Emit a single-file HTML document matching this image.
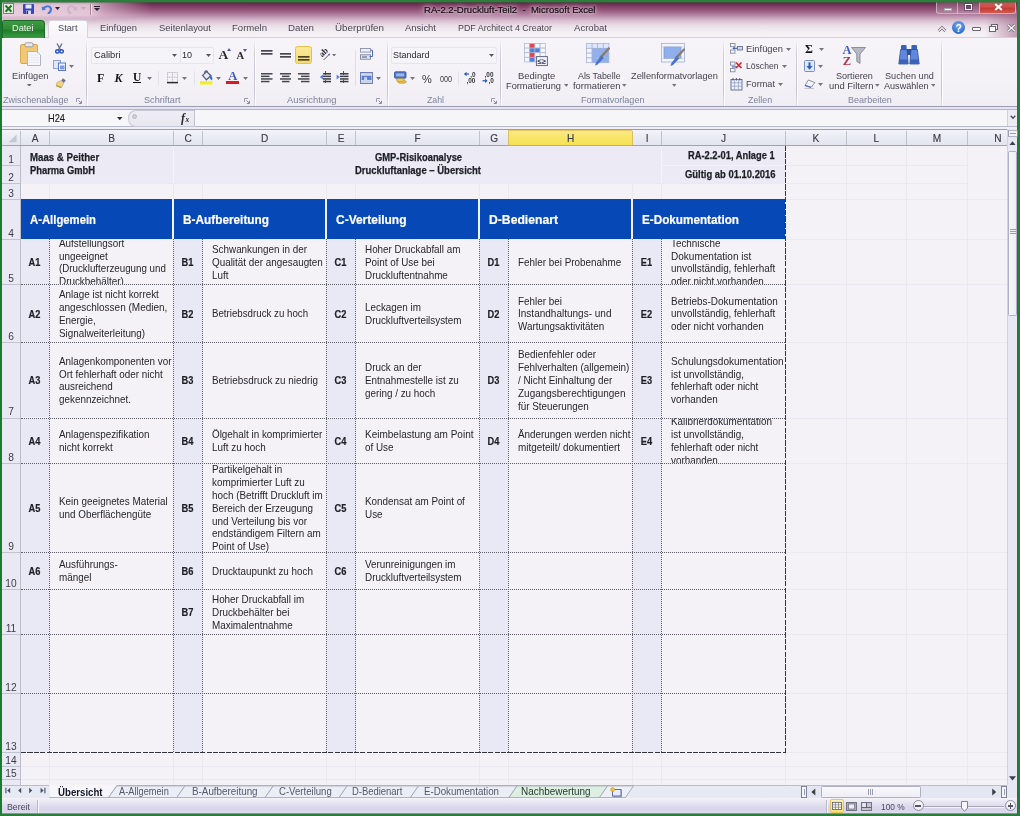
<!DOCTYPE html>
<html lang="de"><head><meta charset="utf-8"><title>RA-2.2-Druckluft-Teil2 - Microsoft Excel</title>
<style>
html,body{margin:0;padding:0}
body{width:1020px;height:816px;overflow:hidden;position:relative;background:#247a36;font-family:"Liberation Sans",sans-serif;font-size:10px;color:#3a3a44}
div,span,svg{position:absolute;box-sizing:border-box}
.t{white-space:nowrap;line-height:12px;font-size:9.6px}
.c{white-space:nowrap;line-height:12.8px;font-size:10px;color:#26262c}
.b{font-weight:bold}
.gl{color:#7886a3}
</style></head>
<body>
<div id="win" style="left:0;top:0;width:1020px;height:816px;will-change:transform">
<div style="left:2px;top:2px;width:1015px;height:811px;background:#f4f2f6"></div>
<div style="left:2px;top:2px;width:1015px;height:36px;background:linear-gradient(to bottom,#5a2342 0%,#6a2c4e 5%,#7f3d63 12%,#935478 22%,#b88aa8 38%,#d9bfd0 52%,#eadfe8 66%,#f3eef3 82%,#f5f2f6 100%)"></div>
<div style="left:2px;top:2px;width:150px;height:19px;background:linear-gradient(to right,rgba(236,212,226,.95) 0%,rgba(232,204,221,.92) 58%,rgba(228,198,216,.6) 68%,rgba(228,198,216,0) 100%);-webkit-mask-image:linear-gradient(to bottom,#000 70%,transparent);mask-image:linear-gradient(to bottom,#000 70%,transparent)"></div>
<div style="left:2px;top:2px;width:1015px;height:36px;background:linear-gradient(to bottom,rgba(255,255,255,0) 0%,rgba(255,255,255,0) 40%,rgba(246,243,247,.0) 100%)"></div>
<div style="left:2px;top:2px;width:100px;height:3px;background:linear-gradient(to bottom,rgba(150,120,140,.45),rgba(150,120,140,0))"></div>
<div style="left:985px;top:14px;width:32px;height:24px;background:linear-gradient(to right,rgba(150,90,125,0),rgba(150,90,125,.55))"></div>
<span class="t" style="left:424px;top:4.2px;font-size:9.7px;color:#140e14;-webkit-text-stroke:.2px #140e14;transform:scaleX(0.9832);transform-origin:0 50%;text-shadow:0 0 5px rgba(255,240,250,.85),0 0 3px rgba(255,240,250,.6),0 0 9px rgba(255,240,250,.7),0 0 12px rgba(255,240,250,.45)">RA-2.2-Druckluft-Teil2&nbsp; -&nbsp; Microsoft Excel</span>
<svg style="left:2.8px;top:3.2px;" width="11" height="11" viewBox="0 0 11 11"><rect x=".5" y=".5" width="10" height="10" fill="#e4f3df" stroke="#5a9a5f"/><path d="M2.5 2.5L8.5 8.7M8.5 2.5L2.5 8.7" stroke="#1f7a2e" stroke-width="2.1"/></svg>
<svg style="left:23px;top:4px;" width="11" height="10" viewBox="0 0 11 10"><rect x="0" y="0" width="11" height="10" rx="1" fill="#3c46b4"/><rect x="2.5" y="0.5" width="6" height="4" fill="#e6ecfb"/><rect x="3" y="6.5" width="5" height="3.5" fill="#d7def5"/><rect x="3.5" y="7" width="1.6" height="3" fill="#2a3190"/></svg>
<svg style="left:41px;top:4px;" width="12" height="10" viewBox="0 0 12 10"><path d="M2.2 4.6C4.5 1.6 9 1.4 9.8 4.6C10.4 7 8.6 8.6 7.6 9.4" fill="none" stroke="#4a78d6" stroke-width="2.2" stroke-linecap="round"/><path d="M0.6 2.2L1.2 6.6L5.2 5.2Z" fill="#4a78d6"/></svg>
<svg style="left:55px;top:7px" width="5" height="3" viewBox="0 0 5 3"><path d="M0 0H5L2.5 3Z" fill="#2a2230"/></svg>
<svg style="left:66px;top:4px;" width="12" height="10" viewBox="0 0 12 10"><path d="M9.8 4.6C7.5 1.6 3 1.4 2.2 4.6C1.6 7 3.4 8.6 4.4 9.4" fill="none" stroke="#cdb4c8" stroke-width="2.2" stroke-linecap="round"/><path d="M11.4 2.2L10.8 6.6L6.8 5.2Z" fill="#cdb4c8"/></svg>
<svg style="left:81px;top:7px" width="5" height="3" viewBox="0 0 5 3"><path d="M0 0H5L2.5 3Z" fill="#c3a9be"/></svg>
<div style="left:90px;top:4px;width:1px;height:11px;background:rgba(120,80,105,.55)"></div>
<div style="left:91px;top:4px;width:1px;height:11px;background:rgba(255,255,255,.5)"></div>
<div style="left:94px;top:6px;width:6px;height:1px;background:#2a2230"></div>
<svg style="left:94px;top:8px" width="6" height="3" viewBox="0 0 6 3"><path d="M0 0H6L3.0 3Z" fill="#2a2230"/></svg>
<div style="left:936px;top:2px;width:80px;height:12px;border:1px solid rgba(255,255,255,.45);border-top:0;border-radius:0 0 3px 3px;background:linear-gradient(to bottom,rgba(150,100,130,.55),rgba(190,150,175,.55))"></div>
<div style="left:957px;top:2px;width:1px;height:11px;background:rgba(255,255,255,.45)"></div>
<div style="left:979px;top:2px;width:1px;height:11px;background:rgba(255,255,255,.45)"></div>
<div style="left:980px;top:2px;width:35px;height:11px;border-radius:0 0 3px 0;background:linear-gradient(to bottom,#c4565a 0%,#d2504c 45%,#c23a32 55%,#d25a4e 100%)"></div>
<div style="left:943.5px;top:8.4px;width:8px;height:2.6px;background:#fff;border:.6px solid rgba(80,50,70,.45)"></div>
<div style="left:964.5px;top:4px;width:7px;height:6.4px;border:1.7px solid #fff;outline:.7px solid rgba(60,40,60,.4);background:rgba(70,50,80,.55)"></div>
<svg style="left:993.5px;top:3.4px;" width="9" height="8" viewBox="0 0 9 8"><path d="M1.2 1L7.8 7M7.8 1L1.2 7" stroke="#fff" stroke-width="2.1"/></svg>
<div style="left:2px;top:37px;width:1015px;height:1px;background:#d3d0dc"></div>
<div style="left:2px;top:20px;width:43px;height:18px;border-radius:2px 4px 0 0;border:1px solid #1c6a28;border-bottom:0;background:linear-gradient(to bottom,#3f9a45 0%,#2f8c36 45%,#1f7f2b 55%,#3c9a42 100%)"></div>
<span class="t" style="left:12px;top:22.4px;font-size:9.9px;color:#f2fbee;transform:scaleX(0.9322);transform-origin:0 50%">Datei</span>
<div style="left:48px;top:20px;width:40px;height:19px;border-radius:3px 3px 0 0;border:1px solid #d6d2de;border-bottom:0;background:linear-gradient(to bottom,#fbfafc,#f5f3f7)"></div>
<span class="t" style="left:58px;top:22.4px;font-size:9.9px;color:#4a4a55;transform:scaleX(0.9348);transform-origin:0 50%">Start</span>
<span class="t" style="left:100px;top:22.4px;font-size:9.9px;color:#4a4652;transform:scaleX(0.9491);transform-origin:0 50%">Einfügen</span>
<span class="t" style="left:159px;top:22.4px;font-size:9.9px;color:#4a4652;transform:scaleX(0.9566);transform-origin:0 50%">Seitenlayout</span>
<span class="t" style="left:232px;top:22.4px;font-size:9.9px;color:#4a4652;transform:scaleX(0.9664);transform-origin:0 50%">Formeln</span>
<span class="t" style="left:288px;top:22.4px;font-size:9.9px;color:#4a4652;transform:scaleX(0.9864);transform-origin:0 50%">Daten</span>
<span class="t" style="left:335px;top:22.4px;font-size:9.9px;color:#4a4652;transform:scaleX(0.9918);transform-origin:0 50%">Überprüfen</span>
<span class="t" style="left:405px;top:22.4px;font-size:9.9px;color:#4a4652;transform:scaleX(0.9571);transform-origin:0 50%">Ansicht</span>
<span class="t" style="left:458px;top:22.4px;font-size:9.9px;color:#4a4652;transform:scaleX(0.9014);transform-origin:0 50%">PDF Architect 4 Creator</span>
<span class="t" style="left:574px;top:22.4px;font-size:9.9px;color:#4a4652;transform:scaleX(0.9693);transform-origin:0 50%">Acrobat</span>
<svg style="left:936.5px;top:24.5px;" width="10" height="8" viewBox="0 0 10 8"><path d="M1.6 6L5 2.6L8.4 6" fill="none" stroke="#6a6470" stroke-width="2.6" stroke-linejoin="miter"/><path d="M1.6 6L5 2.6L8.4 6" fill="none" stroke="#fbfafc" stroke-width="1.1"/></svg>
<div style="left:952px;top:21px;width:13px;height:13px;border-radius:50%;background:radial-gradient(circle at 50% 35%,#7fb0f0,#2f6fd0 70%,#2a5fc0)"></div>
<span class="t" style="left:955.6px;top:21.5px;font-size:10.5px;font-weight:bold;color:#fff">?</span>
<div style="left:972px;top:27px;width:9px;height:4px;background:#fff;border:1px solid #68626e;border-radius:1px"></div>
<div style="left:991px;top:24px;width:7px;height:6px;background:#f3f0f5;border:1px solid #68626e"></div>
<div style="left:989px;top:26px;width:7px;height:6px;background:#fff;border:1px solid #68626e"></div>
<svg style="left:1007px;top:24px;" width="9" height="8" viewBox="0 0 9 8"><path d="M1.2 1L7.8 7M7.8 1L1.2 7" stroke="#6a6470" stroke-width="2.8"/><path d="M1.2 1L7.8 7M7.8 1L1.2 7" stroke="#fff" stroke-width="1.2"/></svg>
<div style="left:2px;top:38px;width:1015px;height:68px;background:linear-gradient(to bottom,#f6f4f8 0%,#f4f2f6 60%,#f0eef4 100%)"></div>
<div style="left:2px;top:106px;width:1015px;height:1px;background:#9c9db2"></div>
<div style="left:2px;top:107px;width:1015px;height:2px;background:#e6e3f0"></div>
<div style="left:2px;top:109px;width:1015px;height:1px;background:#b4b5c6"></div>
<svg style="left:20px;top:42px;" width="21" height="24" viewBox="0 0 21 24"><rect x="0.5" y="2.5" width="17" height="19" rx="1.5" fill="#f1c778" stroke="#d8a750"/><rect x="5" y="0.8" width="8" height="4" rx="1.2" fill="#e9e9ee" stroke="#8d8d98" stroke-width=".8"/><path d="M7.5 9.5H16.5L20.5 13V23.5H7.5Z" fill="#f7f7fb" stroke="#a9adc0" stroke-width=".9"/><path d="M9 13H18M9 15.5H19M9 18H19M9 20.5H19" stroke="#dfe3f0" stroke-width=".8"/></svg>
<span class="t" style="left:11.5px;top:70px;font-size:9.8px;color:#46424e;transform:scaleX(0.9435);transform-origin:0 50%;">Einfügen</span>
<svg style="left:27.3px;top:83.6px" width="4.6" height="2.8" viewBox="0 0 4.6 2.8"><path d="M0 0H4.6L2.3 2.8Z" fill="#6a6670"/></svg>
<svg style="left:55px;top:43px;" width="9" height="11" viewBox="0 0 9 11"><path d="M2 0.5L5.6 7M7 0.5L3.4 7" stroke="#5d6c8c" stroke-width="1.3" fill="none"/><circle cx="2.4" cy="8.4" r="1.7" fill="none" stroke="#2b55c4" stroke-width="1.5"/><circle cx="6.6" cy="8.4" r="1.7" fill="none" stroke="#2b55c4" stroke-width="1.5"/></svg>
<svg style="left:53px;top:60px;" width="13" height="11" viewBox="0 0 13 11"><rect x="0.5" y="0.5" width="7" height="8" fill="#dfe7f8" stroke="#8ea3d0"/><rect x="5.5" y="3" width="7" height="7.5" fill="#eef2fc" stroke="#5878c0"/><rect x="7" y="5.5" width="4.5" height="3.8" fill="#7d9de0"/></svg>
<svg style="left:69px;top:64.5px" width="5" height="3" viewBox="0 0 5 3"><path d="M0 0H5L2.5 3Z" fill="#77737d"/></svg>
<svg style="left:55px;top:77px;" width="12" height="12" viewBox="0 0 12 12"><path d="M8 1.2L10.8 3.6L8.6 6L6 3.8Z" fill="#6a6f9a"/><path d="M2.2 5.2L6.4 3.6L8.8 6.2L6.4 10.6L1.2 8.6Z" fill="#ecd58a" stroke="#c9ab55" stroke-width=".7"/><path d="M1.2 8.6L6.4 10.6" stroke="#b99a45" stroke-width="1.2"/></svg>
<span class="t" style="left:2.5px;top:94px;font-size:9.8px;color:#7d829c;transform:scaleX(0.925);transform-origin:0 50%;">Zwischenablage</span>
<svg style="left:76px;top:97.5px;" width="6" height="6" viewBox="0 0 6 6"><path d="M0.5 4V0.5H4" fill="none" stroke="#9a9aae" stroke-width="1"/><path d="M2.5 2.5L5 5M5.5 2.8V5.5H2.8" fill="none" stroke="#8a8a9e" stroke-width="1"/></svg>
<div style="left:86px;top:40px;width:1px;height:66px;background:linear-gradient(to bottom,rgba(200,198,212,0),#cfcdda 20%,#c6c5d4 80%,rgba(200,198,212,.4))"></div>
<div style="left:87px;top:40px;width:1px;height:66px;background:linear-gradient(to bottom,rgba(255,255,255,0),rgba(255,255,255,.9) 20%,rgba(255,255,255,.9))"></div>
<div style="left:91px;top:46.5px;width:88.5px;height:17px;background:#f5f4f8;border:1px solid #e6e4ec;border-right:0;border-radius:2px 0 0 2px"></div>
<span class="t" style="left:93.5px;top:49px;font-size:9.7px;color:#2c2a32;transform:scaleX(0.9647);transform-origin:0 50%;">Calibri</span>
<svg style="left:171.5px;top:54px" width="5" height="3" viewBox="0 0 5 3"><path d="M0 0H5L2.5 3Z" fill="#5a5660"/></svg>
<div style="left:179.5px;top:46.5px;width:34px;height:17px;background:#f5f4f8;border:1px solid #e6e4ec;border-radius:0 2px 2px 0"></div>
<span class="t" style="left:182.3px;top:49px;font-size:9.7px;color:#2c2a32;transform:scaleX(0.9275);transform-origin:0 50%;">10</span>
<svg style="left:205.5px;top:54px" width="5" height="3" viewBox="0 0 5 3"><path d="M0 0H5L2.5 3Z" fill="#5a5660"/></svg>
<span class="t" style="left:218.5px;top:47.5px;font-family:'Liberation Serif',serif;font-weight:bold;font-size:13.5px;line-height:14px;color:#2a2a30">A</span>
<svg style="left:226.5px;top:48px;" width="4" height="3" viewBox="0 0 4 3"><path d="M0 3L2 0L4 3Z" fill="#4a5cb0"/></svg>
<span class="t" style="left:236.5px;top:49.5px;font-family:'Liberation Serif',serif;font-weight:bold;font-size:10.6px;line-height:12px;color:#2a2a30">A</span>
<svg style="left:243px;top:48.5px;" width="4" height="3" viewBox="0 0 4 3"><path d="M0 0L2 3L4 0Z" fill="#4a5cb0"/></svg>
<span class="t" style="left:97px;top:70.5px;font-family:'Liberation Serif',serif;font-weight:bold;font-size:12px;line-height:14px;color:#141418">F</span>
<span class="t" style="left:114.5px;top:70.5px;font-family:'Liberation Serif',serif;font-weight:bold;font-style:italic;font-size:12px;line-height:14px;color:#141418">K</span>
<span class="t" style="left:133px;top:70px;font-family:'Liberation Serif',serif;font-weight:bold;font-size:11.5px;line-height:14px;color:#141418">U</span>
<div style="left:133px;top:82.3px;width:8px;height:1.2px;background:#141418"></div>
<svg style="left:147px;top:76.5px" width="5" height="3" viewBox="0 0 5 3"><path d="M0 0H5L2.5 3Z" fill="#77737d"/></svg>
<div style="left:158px;top:71px;width:1px;height:14px;background:#e2e0e9"></div>
<svg style="left:166.5px;top:72px;" width="11" height="12" viewBox="0 0 11 12"><path d="M0.5 0.5H10.5V10M0.5 0.5V10M5.5 0.5V10M0.5 5.2H10.5" fill="none" stroke="#b9b7c4" stroke-width="1" stroke-dasharray="1 .6"/><path d="M0 10.6H11" stroke="#2a2a30" stroke-width="1.5"/></svg>
<svg style="left:182px;top:76.5px" width="5" height="3" viewBox="0 0 5 3"><path d="M0 0H5L2.5 3Z" fill="#77737d"/></svg>
<div style="left:194px;top:71px;width:1px;height:14px;background:#e2e0e9"></div>
<svg style="left:200px;top:70px;" width="13" height="15" viewBox="0 0 13 15"><path d="M2.6 5.4L6.6 1.6L11 5.8L6.4 9.8Z" fill="#e6e9f2" stroke="#59607c" stroke-width="1.3"/><path d="M4.8 3.6C4.2 0.4 7.6 -0.2 7.6 2.8" fill="none" stroke="#59607c" stroke-width="1.1"/><path d="M9.6 5.2C12.4 6 13 8.6 11.8 10.2C10.2 9.6 9.4 7.6 9.6 5.2Z" fill="#2f6fd8"/><rect x="0" y="11.2" width="12.5" height="3.3" fill="#f2ee28"/></svg>
<svg style="left:216px;top:76.5px" width="5" height="3" viewBox="0 0 5 3"><path d="M0 0H5L2.5 3Z" fill="#77737d"/></svg>
<span class="t" style="left:228.2px;top:68.6px;font-family:'Liberation Serif',serif;font-weight:bold;font-size:12.5px;line-height:14px;color:#3b5cc0">A</span>
<div style="left:226px;top:81.2px;width:13px;height:3.2px;background:#e01822"></div>
<svg style="left:242.5px;top:76.5px" width="5" height="3" viewBox="0 0 5 3"><path d="M0 0H5L2.5 3Z" fill="#77737d"/></svg>
<span class="t" style="left:144px;top:94px;font-size:9.8px;color:#7d829c;transform:scaleX(0.931);transform-origin:0 50%;">Schriftart</span>
<svg style="left:243.5px;top:97.5px;" width="6" height="6" viewBox="0 0 6 6"><path d="M0.5 4V0.5H4" fill="none" stroke="#9a9aae" stroke-width="1"/><path d="M2.5 2.5L5 5M5.5 2.8V5.5H2.8" fill="none" stroke="#8a8a9e" stroke-width="1"/></svg>
<div style="left:254px;top:40px;width:1px;height:66px;background:linear-gradient(to bottom,rgba(200,198,212,0),#cfcdda 20%,#c6c5d4 80%,rgba(200,198,212,.4))"></div>
<div style="left:255px;top:40px;width:1px;height:66px;background:linear-gradient(to bottom,rgba(255,255,255,0),rgba(255,255,255,.9) 20%,rgba(255,255,255,.9))"></div>
<svg style="left:261px;top:49.6px" width="11.5" height="5.2" viewBox="0 0 11.5 5.2"><rect x="0" y="0" width="11.5" height="1.7" fill="#46464e"/><rect x="0" y="3" width="11.5" height="1.7" fill="#46464e"/></svg>
<svg style="left:279.7px;top:52.8px" width="11.5" height="5.2" viewBox="0 0 11.5 5.2"><rect x="0" y="0" width="11.5" height="1.7" fill="#46464e"/><rect x="0" y="3" width="11.5" height="1.7" fill="#46464e"/></svg>
<div style="left:295px;top:46.3px;width:17.3px;height:17.4px;background:linear-gradient(to bottom,#fbe99a,#f7dc6a);border:1px solid #e3c14e;border-radius:2.5px"></div>
<svg style="left:298px;top:55.6px" width="11.5" height="5.2" viewBox="0 0 11.5 5.2"><rect x="0" y="0" width="11.5" height="1.7" fill="#46422e"/><rect x="0" y="3" width="11.5" height="1.7" fill="#46422e"/></svg>
<svg style="left:317.5px;top:46px;" width="14" height="14" viewBox="0 0 14 14"><text x="0" y="0" font-family="Liberation Serif" font-size="8.6" font-weight="bold" fill="#26262c" transform="translate(4.2,11.6) rotate(-45)">ab</text><path d="M5.6 14L11 8.6" stroke="#4a4a56" stroke-width=".9"/><path d="M9.8 8.2L12.2 7.4L11.4 9.8Z" fill="#4a5cb0"/></svg>
<svg style="left:332.4px;top:53.6px" width="4.2" height="2.6" viewBox="0 0 4.2 2.6"><path d="M0 0H4.2L2.1 2.6Z" fill="#77737d"/></svg>
<div style="left:354.5px;top:50px;width:1px;height:36px;background:#e0dee8"></div>
<svg style="left:360px;top:48px;" width="13" height="12" viewBox="0 0 13 12"><rect x="0.5" y="0.5" width="10" height="3.6" fill="#eef0f8" stroke="#8a90a8" stroke-width=".9"/><rect x="0.5" y="6.8" width="10" height="4.4" fill="#dfe5f4" stroke="#7a84a4" stroke-width=".9"/><path d="M11 2.2H12.5V8.5H9.5" fill="none" stroke="#4a68b8" stroke-width="1"/><path d="M2 9H7" stroke="#55586a" stroke-width="1"/></svg>
<svg style="left:261px;top:72.8px" width="11.5" height="9.8" viewBox="0 0 11.5 9.8"><rect x="0" y="0.0" width="11.5" height="1.5" fill="#46464e"/><rect x="0" y="2.6" width="8.5" height="1.5" fill="#46464e"/><rect x="0" y="5.2" width="11.5" height="1.5" fill="#46464e"/><rect x="0" y="7.8" width="8.5" height="1.5" fill="#46464e"/></svg>
<svg style="left:279.7px;top:72.8px" width="11.5" height="9.8" viewBox="0 0 11.5 9.8"><rect x="0.0" y="0.0" width="11.5" height="1.5" fill="#46464e"/><rect x="2.0" y="2.6" width="7.5" height="1.5" fill="#46464e"/><rect x="0.0" y="5.2" width="11.5" height="1.5" fill="#46464e"/><rect x="2.0" y="7.8" width="7.5" height="1.5" fill="#46464e"/></svg>
<svg style="left:298px;top:72.8px" width="11.5" height="9.8" viewBox="0 0 11.5 9.8"><rect x="0.0" y="0.0" width="11.5" height="1.5" fill="#46464e"/><rect x="3.0" y="2.6" width="8.5" height="1.5" fill="#46464e"/><rect x="0.0" y="5.2" width="11.5" height="1.5" fill="#46464e"/><rect x="3.0" y="7.8" width="8.5" height="1.5" fill="#46464e"/></svg>
<svg style="left:322.5px;top:72.8px" width="8.5" height="9.8" viewBox="0 0 8.5 9.8"><rect x="0" y="0.0" width="8.5" height="1.5" fill="#3c3c46"/><rect x="0" y="2.6" width="8.5" height="1.5" fill="#3c3c46"/><rect x="0" y="5.2" width="8.5" height="1.5" fill="#3c3c46"/><rect x="0" y="7.8" width="8.5" height="1.5" fill="#3c3c46"/></svg>
<svg style="left:318.6px;top:74.2px;" width="4.5" height="6" viewBox="0 0 4.5 6"><path d="M4 0.6L0.8 3L4 5.4Z" fill="#5a7fd6"/></svg>
<div style="left:325px;top:70.5px;width:1px;height:12.5px;border-left:1px dotted #555"></div>
<svg style="left:340px;top:72.8px" width="8.5" height="9.8" viewBox="0 0 8.5 9.8"><rect x="0" y="0.0" width="8.5" height="1.5" fill="#3c3c46"/><rect x="0" y="2.6" width="8.5" height="1.5" fill="#3c3c46"/><rect x="0" y="5.2" width="8.5" height="1.5" fill="#3c3c46"/><rect x="0" y="7.8" width="8.5" height="1.5" fill="#3c3c46"/></svg>
<svg style="left:336.4px;top:74.2px;" width="4.5" height="6" viewBox="0 0 4.5 6"><path d="M0.6 0.6L3.8 3L0.6 5.4Z" fill="#5a7fd6"/></svg>
<div style="left:342.5px;top:70.5px;width:1px;height:12.5px;border-left:1px dotted #555"></div>
<svg style="left:360px;top:72px;" width="13" height="12" viewBox="0 0 13 12"><rect x="0.5" y="0.5" width="12" height="11" fill="#e6ecfa" stroke="#6f7fae" stroke-width="1"/><rect x="1.5" y="3.6" width="10" height="4.6" fill="#5c7fd0"/><text x="4" y="8" font-family="Liberation Sans" font-size="5.5" font-weight="bold" fill="#fff">a</text><path d="M0.5 1.8H12.5M0.5 10H12.5" stroke="#9aa6c8" stroke-width=".7"/></svg>
<svg style="left:376px;top:76.5px" width="5" height="3" viewBox="0 0 5 3"><path d="M0 0H5L2.5 3Z" fill="#77737d"/></svg>
<span class="t" style="left:287.4px;top:94px;font-size:9.8px;color:#7d829c;transform:scaleX(0.9546);transform-origin:0 50%;">Ausrichtung</span>
<svg style="left:376px;top:97.5px;" width="6" height="6" viewBox="0 0 6 6"><path d="M0.5 4V0.5H4" fill="none" stroke="#9a9aae" stroke-width="1"/><path d="M2.5 2.5L5 5M5.5 2.8V5.5H2.8" fill="none" stroke="#8a8a9e" stroke-width="1"/></svg>
<div style="left:386.5px;top:40px;width:1px;height:66px;background:linear-gradient(to bottom,rgba(200,198,212,0),#cfcdda 20%,#c6c5d4 80%,rgba(200,198,212,.4))"></div>
<div style="left:387.5px;top:40px;width:1px;height:66px;background:linear-gradient(to bottom,rgba(255,255,255,0),rgba(255,255,255,.9) 20%,rgba(255,255,255,.9))"></div>
<div style="left:391px;top:46.5px;width:105.5px;height:17px;background:#f5f4f8;border:1px solid #e6e4ec;border-radius:2px"></div>
<span class="t" style="left:393.4px;top:49px;font-size:9.7px;color:#2c2a32;transform:scaleX(0.9306);transform-origin:0 50%;">Standard</span>
<svg style="left:488.8px;top:54px" width="5" height="3" viewBox="0 0 5 3"><path d="M0 0H5L2.5 3Z" fill="#5a5660"/></svg>
<svg style="left:393.5px;top:71px;" width="14" height="14" viewBox="0 0 14 14"><rect x="0.5" y="0.8" width="11.5" height="6.4" rx="1" fill="#4f74c8" stroke="#34509a" stroke-width=".8"/><rect x="2.2" y="2.4" width="8" height="3" fill="#9db6ec"/><ellipse cx="8" cy="10.8" rx="4.4" ry="1.5" fill="#e9c04a" stroke="#b58a25" stroke-width=".6"/><ellipse cx="6.4" cy="9" rx="4.2" ry="1.4" fill="#f0cf6a" stroke="#b58a25" stroke-width=".6"/></svg>
<svg style="left:410px;top:76.5px" width="5" height="3" viewBox="0 0 5 3"><path d="M0 0H5L2.5 3Z" fill="#77737d"/></svg>
<span class="t" style="left:422px;top:71.5px;font-size:11px;line-height:14px;color:#3a3a42">%</span>
<span class="t" style="left:439.6px;top:72.5px;font-size:9.7px;color:#3a3a42;transform:scaleX(0.742);transform-origin:0 50%;">000</span>
<div style="left:457.5px;top:71px;width:1px;height:14px;background:#e2e0e9"></div>
<svg style="left:464px;top:71px;" width="14" height="14" viewBox="0 0 14 14"><path d="M0.5 3H5" stroke="#2e5fc4" stroke-width="1.3"/><path d="M0 3L2.6 0.8V5.2Z" fill="#2e5fc4"/><text x="6.2" y="5.6" font-family="Liberation Sans" font-size="6.4" font-weight="bold" fill="#33333a">,0</text><text x="2.4" y="12.4" font-family="Liberation Sans" font-size="6.4" font-weight="bold" fill="#33333a">,00</text></svg>
<svg style="left:481.5px;top:71px;" width="14" height="14" viewBox="0 0 14 14"><text x="2.6" y="5.6" font-family="Liberation Sans" font-size="6.4" font-weight="bold" fill="#33333a">,00</text><path d="M0.5 9.8H5" stroke="#2e5fc4" stroke-width="1.3"/><path d="M5.6 9.8L3 7.6V12Z" fill="#2e5fc4"/><text x="6.6" y="12.4" font-family="Liberation Sans" font-size="6.4" font-weight="bold" fill="#33333a">,0</text></svg>
<span class="t" style="left:427.4px;top:94px;font-size:9.8px;color:#7d829c;transform:scaleX(0.8918);transform-origin:0 50%;">Zahl</span>
<svg style="left:490.5px;top:97.5px;" width="6" height="6" viewBox="0 0 6 6"><path d="M0.5 4V0.5H4" fill="none" stroke="#9a9aae" stroke-width="1"/><path d="M2.5 2.5L5 5M5.5 2.8V5.5H2.8" fill="none" stroke="#8a8a9e" stroke-width="1"/></svg>
<div style="left:500px;top:40px;width:1px;height:66px;background:linear-gradient(to bottom,rgba(200,198,212,0),#cfcdda 20%,#c6c5d4 80%,rgba(200,198,212,.4))"></div>
<div style="left:501px;top:40px;width:1px;height:66px;background:linear-gradient(to bottom,rgba(255,255,255,0),rgba(255,255,255,.9) 20%,rgba(255,255,255,.9))"></div>
<svg style="left:524px;top:42.5px;" width="24" height="24" viewBox="0 0 24 24"><rect x="0.5" y="0.5" width="5.2" height="4.6" fill="#f5f6fb" stroke="#a9b4d4" stroke-width=".7"/><rect x="5.7" y="0.5" width="5.2" height="4.6" fill="#e84448" stroke="#a9b4d4" stroke-width=".7"/><rect x="10.9" y="0.5" width="5.2" height="4.6" fill="#f5f6fb" stroke="#a9b4d4" stroke-width=".7"/><rect x="16.1" y="0.5" width="5.2" height="4.6" fill="#f5f6fb" stroke="#a9b4d4" stroke-width=".7"/><rect x="0.5" y="5.1" width="5.2" height="4.6" fill="#f5f6fb" stroke="#a9b4d4" stroke-width=".7"/><rect x="5.7" y="5.1" width="5.2" height="4.6" fill="#4f7fe0" stroke="#a9b4d4" stroke-width=".7"/><rect x="10.9" y="5.1" width="5.2" height="4.6" fill="#4f7fe0" stroke="#a9b4d4" stroke-width=".7"/><rect x="16.1" y="5.1" width="5.2" height="4.6" fill="#f5f6fb" stroke="#a9b4d4" stroke-width=".7"/><rect x="0.5" y="9.7" width="5.2" height="4.6" fill="#f5f6fb" stroke="#a9b4d4" stroke-width=".7"/><rect x="5.7" y="9.7" width="5.2" height="4.6" fill="#e84448" stroke="#a9b4d4" stroke-width=".7"/><rect x="10.9" y="9.7" width="5.2" height="4.6" fill="#f5f6fb" stroke="#a9b4d4" stroke-width=".7"/><rect x="16.1" y="9.7" width="5.2" height="4.6" fill="#f5f6fb" stroke="#a9b4d4" stroke-width=".7"/><rect x="0.5" y="14.299999999999999" width="5.2" height="4.6" fill="#f5f6fb" stroke="#a9b4d4" stroke-width=".7"/><rect x="5.7" y="14.299999999999999" width="5.2" height="4.6" fill="#4f7fe0" stroke="#a9b4d4" stroke-width=".7"/><rect x="10.9" y="14.299999999999999" width="5.2" height="4.6" fill="#f5f6fb" stroke="#a9b4d4" stroke-width=".7"/><rect x="16.1" y="14.299999999999999" width="5.2" height="4.6" fill="#f5f6fb" stroke="#a9b4d4" stroke-width=".7"/><rect x="12.4" y="13.6" width="11" height="9" fill="#eef1f8" stroke="#5a6078" stroke-width=".9"/><text x="13.6" y="21" font-family="Liberation Sans" font-size="7.5" font-weight="bold" fill="#33384a">≤≥</text></svg>
<span class="t" style="left:518.3px;top:70px;font-size:9.8px;color:#46424e;transform:scaleX(0.9641);transform-origin:0 50%;">Bedingte</span>
<span class="t" style="left:506px;top:80.3px;font-size:9.8px;color:#46424e;transform:scaleX(0.944);transform-origin:0 50%;">Formatierung</span>
<svg style="left:563.5px;top:84.2px" width="4.6" height="2.8" viewBox="0 0 4.6 2.8"><path d="M0 0H4.6L2.3 2.8Z" fill="#77737d"/></svg>
<svg style="left:586px;top:43px;" width="24" height="24" viewBox="0 0 24 24"><rect x="0.5" y="0.5" width="5.6" height="4.8" fill="#dfe8fb" stroke="#9fb0d8" stroke-width=".7"/><rect x="6.1" y="0.5" width="5.6" height="4.8" fill="#dfe8fb" stroke="#9fb0d8" stroke-width=".7"/><rect x="11.7" y="0.5" width="5.6" height="4.8" fill="#dfe8fb" stroke="#9fb0d8" stroke-width=".7"/><rect x="17.299999999999997" y="0.5" width="5.6" height="4.8" fill="#dfe8fb" stroke="#9fb0d8" stroke-width=".7"/><rect x="0.5" y="5.3" width="5.6" height="4.8" fill="#f5f6fb" stroke="#9fb0d8" stroke-width=".7"/><rect x="6.1" y="5.3" width="5.6" height="4.8" fill="#8fb0ec" stroke="#9fb0d8" stroke-width=".7"/><rect x="11.7" y="5.3" width="5.6" height="4.8" fill="#8fb0ec" stroke="#9fb0d8" stroke-width=".7"/><rect x="17.299999999999997" y="5.3" width="5.6" height="4.8" fill="#8fb0ec" stroke="#9fb0d8" stroke-width=".7"/><rect x="0.5" y="10.1" width="5.6" height="4.8" fill="#f5f6fb" stroke="#9fb0d8" stroke-width=".7"/><rect x="6.1" y="10.1" width="5.6" height="4.8" fill="#8fb0ec" stroke="#9fb0d8" stroke-width=".7"/><rect x="11.7" y="10.1" width="5.6" height="4.8" fill="#8fb0ec" stroke="#9fb0d8" stroke-width=".7"/><rect x="17.299999999999997" y="10.1" width="5.6" height="4.8" fill="#8fb0ec" stroke="#9fb0d8" stroke-width=".7"/><rect x="0.5" y="14.899999999999999" width="5.6" height="4.8" fill="#f5f6fb" stroke="#9fb0d8" stroke-width=".7"/><rect x="6.1" y="14.899999999999999" width="5.6" height="4.8" fill="#8fb0ec" stroke="#9fb0d8" stroke-width=".7"/><rect x="11.7" y="14.899999999999999" width="5.6" height="4.8" fill="#8fb0ec" stroke="#9fb0d8" stroke-width=".7"/><rect x="17.299999999999997" y="14.899999999999999" width="5.6" height="4.8" fill="#8fb0ec" stroke="#9fb0d8" stroke-width=".7"/><path d="M22.8 5.5L14.5 14.5" stroke="#8c7a70" stroke-width="2.4" stroke-linecap="round"/><path d="M15.6 12.6L17.8 15L11.6 21.6L9 22.6L10 19.6Z" fill="#4a72cc"/></svg>
<span class="t" style="left:578px;top:70px;font-size:9.8px;color:#46424e;transform:scaleX(0.9025);transform-origin:0 50%;">Als Tabelle</span>
<span class="t" style="left:572.6px;top:80.3px;font-size:9.8px;color:#46424e;transform:scaleX(0.9564);transform-origin:0 50%;">formatieren</span>
<svg style="left:622px;top:84.2px" width="4.6" height="2.8" viewBox="0 0 4.6 2.8"><path d="M0 0H4.6L2.3 2.8Z" fill="#77737d"/></svg>
<svg style="left:661px;top:43px;" width="24" height="24" viewBox="0 0 24 24"><rect x="0.5" y="0.5" width="23" height="18.5" fill="#f3f5fb" stroke="#9fb0d8" stroke-width=".8"/><rect x="3" y="4" width="17" height="11.5" fill="#8fb0ec" stroke="#6f8fd0" stroke-width=".7"/><path d="M0.5 4H23.5M0.5 15.5H23.5" stroke="#b5c2e0" stroke-width=".6"/><path d="M23 6.5L15 15" stroke="#8c7a70" stroke-width="2.4" stroke-linecap="round"/><path d="M16 13L18.2 15.4L12 22L9.4 23L10.4 20Z" fill="#4a72cc"/></svg>
<span class="t" style="left:630.8px;top:70px;font-size:9.8px;color:#46424e;transform:scaleX(0.9432);transform-origin:0 50%;">Zellenformatvorlagen</span>
<svg style="left:671.5px;top:84.2px" width="4.6" height="2.8" viewBox="0 0 4.6 2.8"><path d="M0 0H4.6L2.3 2.8Z" fill="#77737d"/></svg>
<span class="t" style="left:580.8px;top:94px;font-size:9.8px;color:#7d829c;transform:scaleX(0.9255);transform-origin:0 50%;">Formatvorlagen</span>
<div style="left:723px;top:40px;width:1px;height:66px;background:linear-gradient(to bottom,rgba(200,198,212,0),#cfcdda 20%,#c6c5d4 80%,rgba(200,198,212,.4))"></div>
<div style="left:724px;top:40px;width:1px;height:66px;background:linear-gradient(to bottom,rgba(255,255,255,0),rgba(255,255,255,.9) 20%,rgba(255,255,255,.9))"></div>
<svg style="left:730px;top:43px;" width="13" height="11" viewBox="0 0 13 11"><rect x="0.5" y="0.5" width="4.5" height="3.2" fill="#f4f5fa" stroke="#7a8098" stroke-width=".8"/><rect x="0.5" y="7" width="4.5" height="3.2" fill="#f4f5fa" stroke="#7a8098" stroke-width=".8"/><rect x="7.4" y="3.4" width="5" height="3.6" fill="#cfd8ee" stroke="#5a6484" stroke-width=".8"/><path d="M3 5.3H7" stroke="#3c5cb8" stroke-width="1.2"/><path d="M2.4 5.3L4.6 3.8V6.8Z" fill="#3c5cb8"/></svg>
<span class="t" style="left:745.5px;top:42.5px;font-size:9.8px;color:#46424e;transform:scaleX(0.9564);transform-origin:0 50%;">Einfügen</span>
<svg style="left:786px;top:47.5px" width="5" height="3" viewBox="0 0 5 3"><path d="M0 0H5L2.5 3Z" fill="#77737d"/></svg>
<svg style="left:730px;top:60.5px;" width="13" height="12" viewBox="0 0 13 12"><rect x="0.5" y="1" width="4.5" height="3.2" fill="#f4f5fa" stroke="#7a8098" stroke-width=".8"/><rect x="0.5" y="7.6" width="4.5" height="3.2" fill="#f4f5fa" stroke="#7a8098" stroke-width=".8"/><path d="M6 1.5L11.5 7M11.5 1.5L6 7" stroke="#d8282c" stroke-width="1.7"/><path d="M2 5.9H6.5" stroke="#3c5cb8" stroke-width="1.1"/></svg>
<span class="t" style="left:745.5px;top:60.3px;font-size:9.8px;color:#46424e;transform:scaleX(0.8773);transform-origin:0 50%;">Löschen</span>
<svg style="left:782px;top:65.3px" width="5" height="3" viewBox="0 0 5 3"><path d="M0 0H5L2.5 3Z" fill="#77737d"/></svg>
<svg style="left:730px;top:78px;" width="13" height="13" viewBox="0 0 13 13"><rect x="1" y="1.5" width="11" height="10.5" fill="#eef2fb" stroke="#5a6890" stroke-width=".9"/><path d="M1 4.8H12M1 8.2H12M4.6 1.5V12M8.4 1.5V12" stroke="#8a98c0" stroke-width=".7"/><path d="M3 0V2.6M6.4 0V2.6M9.8 0V2.6" stroke="#4a5678" stroke-width=".9"/></svg>
<span class="t" style="left:745.5px;top:78px;font-size:9.8px;color:#46424e;transform:scaleX(0.9345);transform-origin:0 50%;">Format</span>
<svg style="left:777.5px;top:83.2px" width="5" height="3" viewBox="0 0 5 3"><path d="M0 0H5L2.5 3Z" fill="#77737d"/></svg>
<span class="t" style="left:748.4px;top:94px;font-size:9.8px;color:#7d829c;transform:scaleX(0.9068);transform-origin:0 50%;">Zellen</span>
<div style="left:796px;top:40px;width:1px;height:66px;background:linear-gradient(to bottom,rgba(200,198,212,0),#cfcdda 20%,#c6c5d4 80%,rgba(200,198,212,.4))"></div>
<div style="left:797px;top:40px;width:1px;height:66px;background:linear-gradient(to bottom,rgba(255,255,255,0),rgba(255,255,255,.9) 20%,rgba(255,255,255,.9))"></div>
<span class="t" style="left:805px;top:41.6px;font-family:'Liberation Serif',serif;font-weight:bold;font-size:12px;line-height:14px;color:#141418">Σ</span>
<svg style="left:819px;top:47.5px" width="5" height="3" viewBox="0 0 5 3"><path d="M0 0H5L2.5 3Z" fill="#77737d"/></svg>
<svg style="left:804px;top:60px;" width="11" height="12" viewBox="0 0 11 12"><rect x="0.5" y="0.5" width="10" height="11" rx="1" fill="#dfe8fb" stroke="#6f86c4" stroke-width=".9"/><path d="M5.5 2.4V7" stroke="#2e5fc4" stroke-width="2"/><path d="M2.4 6L5.5 9.8L8.6 6Z" fill="#2e5fc4"/></svg>
<svg style="left:817.5px;top:65.3px" width="5" height="3" viewBox="0 0 5 3"><path d="M0 0H5L2.5 3Z" fill="#77737d"/></svg>
<svg style="left:803.5px;top:79px;" width="12" height="10" viewBox="0 0 12 10"><path d="M4.4 1L10.8 3.6L7 8.4L1 6.4Z" fill="#f7f7fb" stroke="#7a8098" stroke-width=".9"/><path d="M1 6.4L7 8.4" stroke="#5a74c0" stroke-width="1.4"/><path d="M0.5 9.4H10" stroke="#a8aabb" stroke-width=".7"/></svg>
<svg style="left:817.5px;top:83.2px" width="5" height="3" viewBox="0 0 5 3"><path d="M0 0H5L2.5 3Z" fill="#77737d"/></svg>
<svg style="left:842px;top:43px;" width="24" height="23" viewBox="0 0 24 23"><text x="0.5" y="10.5" font-family="Liberation Serif" font-size="12.5" font-weight="bold" fill="#3e5ec0">A</text><text x="0.8" y="22.4" font-family="Liberation Serif" font-size="12.5" font-weight="bold" fill="#b8344a">Z</text><path d="M9.5 4.5H23.5L18 11V20.5L14.8 18.4V11Z" fill="#b6b9c4" stroke="#858894" stroke-width=".9"/></svg>
<span class="t" style="left:835.8px;top:70px;font-size:9.8px;color:#46424e;transform:scaleX(0.9254);transform-origin:0 50%;">Sortieren</span>
<span class="t" style="left:828.8px;top:80.3px;font-size:9.8px;color:#46424e;transform:scaleX(0.9612);transform-origin:0 50%;">und Filtern</span>
<svg style="left:875.2px;top:84.2px" width="4.6" height="2.8" viewBox="0 0 4.6 2.8"><path d="M0 0H4.6L2.3 2.8Z" fill="#77737d"/></svg>
<svg style="left:898px;top:43.5px;" width="22" height="22" viewBox="0 0 22 22"><rect x="3" y="1" width="5.6" height="5" rx="1" fill="#3b62b8"/><rect x="13.4" y="1" width="5.6" height="5" rx="1" fill="#3b62b8"/><rect x="8" y="5" width="6" height="6" fill="#2f4f9c"/><path d="M2.6 5.5H9L10.2 20H0.8Z" fill="#5f88dc" stroke="#2f4f9c" stroke-width=".8"/><path d="M13 5.5H19.4L21.2 20H11.8Z" fill="#5f88dc" stroke="#2f4f9c" stroke-width=".8"/><rect x="1" y="15.5" width="9" height="4.5" fill="#3b62b8"/><rect x="12" y="15.5" width="9" height="4.5" fill="#3b62b8"/></svg>
<span class="t" style="left:885px;top:70px;font-size:9.8px;color:#46424e;transform:scaleX(0.9331);transform-origin:0 50%;">Suchen und</span>
<span class="t" style="left:884.3px;top:80.3px;font-size:9.8px;color:#46424e;transform:scaleX(0.9283);transform-origin:0 50%;">Auswählen</span>
<svg style="left:930.7px;top:84.2px" width="4.6" height="2.8" viewBox="0 0 4.6 2.8"><path d="M0 0H4.6L2.3 2.8Z" fill="#77737d"/></svg>
<span class="t" style="left:847.5px;top:94px;font-size:9.8px;color:#7d829c;transform:scaleX(0.9242);transform-origin:0 50%;">Bearbeiten</span>
<div style="left:940.5px;top:40px;width:1px;height:66px;background:linear-gradient(to bottom,rgba(200,198,212,0),#cfcdda 20%,#c6c5d4 80%,rgba(200,198,212,.4))"></div>
<div style="left:941.5px;top:40px;width:1px;height:66px;background:linear-gradient(to bottom,rgba(255,255,255,0),rgba(255,255,255,.9) 20%,rgba(255,255,255,.9))"></div>
<div style="left:2px;top:110px;width:1015px;height:20px;background:#f5f4f8"></div>
<div style="left:2px;top:126px;width:1015px;height:1px;background:#b9b9c8"></div>
<div style="left:2px;top:127px;width:1015px;height:2px;background:#f0eff5"></div>
<div style="left:2px;top:129px;width:1015px;height:1px;background:#9c9db2"></div>
<div style="left:3px;top:110px;width:124px;height:16px;background:#f7f6f9"></div>
<span class="t" style="left:47.8px;top:113.2px;font-size:10.4px;color:#1e1e24;-webkit-text-stroke:.15px #1e1e24;transform:scaleX(0.8918);transform-origin:0 50%">H24</span>
<svg style="left:117px;top:117.3px" width="5.5" height="3.2" viewBox="0 0 5.5 3.2"><path d="M0 0H5.5L2.75 3.2Z" fill="#2c2c34"/></svg>
<div style="left:128px;top:110px;width:67px;height:16.5px;border:1px solid #c9c8d6;border-right:0;border-radius:8px 0 0 8px;background:linear-gradient(to bottom,#eeedf4,#e9e8f1)"></div>
<div style="left:131.5px;top:113.5px;width:5px;height:5px;border-radius:50%;background:#cfcfdc;border:1px solid #b9b9c8"></div>
<span class="t" style="left:181px;top:111.3px;font-family:'Liberation Serif',serif;font-style:italic;font-weight:bold;font-size:12px;line-height:14px;color:#2a2a30">f</span>
<span class="t" style="left:185.5px;top:114.6px;font-family:'Liberation Serif',serif;font-style:italic;font-weight:bold;font-size:7.5px;line-height:10px;color:#2a2a30">x</span>
<div style="left:194px;top:110px;width:1px;height:16px;background:#c2c2d0"></div>
<div style="left:195px;top:110px;width:812px;height:16px;background:#f6f5f8"></div>
<div style="left:1007px;top:110px;width:10px;height:16px;background:#ecebf2;border-left:1px solid #cfcfdb"></div>
<svg style="left:1010px;top:115.4px;" width="6" height="4.4" viewBox="0 0 6 4.4"><path d="M0.7 0.7L3 3.2L5.3 0.7" fill="none" stroke="#4a4a56" stroke-width="1.3"/></svg>
<div style="left:21px;top:146px;width:986px;height:639px;background:#f4f2f6"></div>
<div style="left:49px;top:146px;width:1px;height:639px;background:#ebe9ef"></div>
<div style="left:173px;top:146px;width:1px;height:639px;background:#ebe9ef"></div>
<div style="left:202px;top:146px;width:1px;height:639px;background:#ebe9ef"></div>
<div style="left:326px;top:146px;width:1px;height:639px;background:#ebe9ef"></div>
<div style="left:355px;top:146px;width:1px;height:639px;background:#ebe9ef"></div>
<div style="left:479px;top:146px;width:1px;height:639px;background:#ebe9ef"></div>
<div style="left:508px;top:146px;width:1px;height:639px;background:#ebe9ef"></div>
<div style="left:632px;top:146px;width:1px;height:639px;background:#ebe9ef"></div>
<div style="left:661px;top:146px;width:1px;height:639px;background:#ebe9ef"></div>
<div style="left:785px;top:146px;width:1px;height:639px;background:#ebe9ef"></div>
<div style="left:845.5px;top:146px;width:1px;height:639px;background:#ebe9ef"></div>
<div style="left:906px;top:146px;width:1px;height:639px;background:#ebe9ef"></div>
<div style="left:966.5px;top:146px;width:1px;height:639px;background:#ebe9ef"></div>
<div style="left:21px;top:165px;width:986px;height:1px;background:#ebe9ef"></div>
<div style="left:21px;top:183px;width:986px;height:1px;background:#ebe9ef"></div>
<div style="left:21px;top:199px;width:986px;height:1px;background:#ebe9ef"></div>
<div style="left:21px;top:239.4px;width:986px;height:1px;background:#ebe9ef"></div>
<div style="left:21px;top:284.4px;width:986px;height:1px;background:#ebe9ef"></div>
<div style="left:21px;top:342.2px;width:986px;height:1px;background:#ebe9ef"></div>
<div style="left:21px;top:417.5px;width:986px;height:1px;background:#ebe9ef"></div>
<div style="left:21px;top:463px;width:986px;height:1px;background:#ebe9ef"></div>
<div style="left:21px;top:552px;width:986px;height:1px;background:#ebe9ef"></div>
<div style="left:21px;top:589.2px;width:986px;height:1px;background:#ebe9ef"></div>
<div style="left:21px;top:634px;width:986px;height:1px;background:#ebe9ef"></div>
<div style="left:21px;top:693px;width:986px;height:1px;background:#ebe9ef"></div>
<div style="left:21px;top:752px;width:986px;height:1px;background:#ebe9ef"></div>
<div style="left:21px;top:765.8px;width:986px;height:1px;background:#ebe9ef"></div>
<div style="left:21px;top:779.4px;width:986px;height:1px;background:#ebe9ef"></div>
<div style="left:967.5px;top:146px;width:40px;height:37.5px;background:#f4f2f6"></div>
<div style="left:21px;top:146px;width:764px;height:37px;background:#ecebf5"></div>
<div style="left:173px;top:146px;width:1px;height:37px;background:#f4f3f9"></div>
<div style="left:661px;top:146px;width:1px;height:37px;background:#f4f3f9"></div>
<div style="left:661px;top:165px;width:124px;height:1px;background:#f4f3f9"></div>
<span class="c" style="left:29.6px;top:152.2px;font-weight:bold;font-size:10.2px;color:#1e1e26;-webkit-text-stroke:.25px #1e1e26;transform:scaleX(0.9473);transform-origin:0 50%">Maas &amp; Peither</span>
<span class="c" style="left:29.6px;top:165.0px;font-weight:bold;font-size:10.2px;color:#1e1e26;-webkit-text-stroke:.25px #1e1e26;transform:scaleX(0.9185);transform-origin:0 50%">Pharma GmbH</span>
<span class="c" style="left:374.5px;top:152.2px;font-weight:bold;font-size:10.2px;color:#1e1e26;-webkit-text-stroke:.25px #1e1e26;transform:scaleX(0.9211);transform-origin:0 50%">GMP-Risikoanalyse</span>
<span class="c" style="left:355px;top:165.0px;font-weight:bold;font-size:10.2px;color:#1e1e26;-webkit-text-stroke:.25px #1e1e26;transform:scaleX(0.9312);transform-origin:0 50%">Druckluftanlage – Übersicht</span>
<span class="c" style="left:688.4px;top:150.2px;font-weight:bold;font-size:10.2px;color:#1e1e26;-webkit-text-stroke:.25px #1e1e26;transform:scaleX(0.914);transform-origin:0 50%">RA-2.2-01, Anlage 1</span>
<span class="c" style="left:685px;top:168.6px;font-weight:bold;font-size:10.2px;color:#1e1e26;-webkit-text-stroke:.25px #1e1e26;transform:scaleX(0.9248);transform-origin:0 50%">Gültig ab 01.10.2016</span>
<div style="left:20.5px;top:199px;width:764.5px;height:40.400000000000006px;background:#0548b6"></div>
<span class="c" style="left:29.9px;top:212.5px;font-weight:bold;font-size:12.3px;line-height:14px;color:#fff;-webkit-text-stroke:.2px #fff;transform:scaleX(0.9199);transform-origin:0 50%">A-Allgemein</span>
<div style="left:172.4px;top:199px;width:1.6px;height:40.400000000000006px;background:#f2f2fa"></div>
<span class="c" style="left:182.9px;top:212.5px;font-weight:bold;font-size:12.3px;line-height:14px;color:#fff;-webkit-text-stroke:.2px #fff;transform:scaleX(0.9611);transform-origin:0 50%">B-Aufbereitung</span>
<div style="left:325.4px;top:199px;width:1.6px;height:40.400000000000006px;background:#f2f2fa"></div>
<span class="c" style="left:335.9px;top:212.5px;font-weight:bold;font-size:12.3px;line-height:14px;color:#fff;-webkit-text-stroke:.2px #fff;transform:scaleX(0.9733);transform-origin:0 50%">C-Verteilung</span>
<div style="left:478.4px;top:199px;width:1.6px;height:40.400000000000006px;background:#f2f2fa"></div>
<span class="c" style="left:488.9px;top:212.5px;font-weight:bold;font-size:12.3px;line-height:14px;color:#fff;-webkit-text-stroke:.2px #fff;transform:scaleX(0.9899);transform-origin:0 50%">D-Bedienart</span>
<div style="left:631.4px;top:199px;width:1.6px;height:40.400000000000006px;background:#f2f2fa"></div>
<span class="c" style="left:641.9px;top:212.5px;font-weight:bold;font-size:12.3px;line-height:14px;color:#fff;-webkit-text-stroke:.2px #fff;transform:scaleX(0.9529);transform-origin:0 50%">E-Dokumentation</span>
<div style="left:20.5px;top:239.4px;width:29px;height:44.99999999999997px;background:#e9e8f5"></div>
<span class="c" style="left:20.4px;top:257.2px;font-weight:bold;font-size:10.3px;width:29px;text-align:center;color:#1e1e26;-webkit-text-stroke:.2px #1e1e26;transform:scaleX(.9)">A1</span>
<div style="left:50px;top:239.9px;width:123px;height:44.49999999999997px;overflow:hidden"><span class="c" style="left:9.3px;top:-3.1px;line-height:12.85px;font-size:10.5px;transform:scaleX(0.94);transform-origin:0 0">Aufstellungsort</span>
<span class="c" style="left:9.3px;top:9.75px;line-height:12.85px;font-size:10.5px;transform:scaleX(0.94);transform-origin:0 0">ungeeignet</span>
<span class="c" style="left:9.3px;top:22.6px;line-height:12.85px;font-size:10.5px;transform:scaleX(0.9296);transform-origin:0 0">(Drucklufterzeugung und</span>
<span class="c" style="left:9.3px;top:35.45px;line-height:12.85px;font-size:10.5px;transform:scaleX(0.94);transform-origin:0 0">Druckbehälter)</span>
</div>
<div style="left:173.5px;top:239.4px;width:29px;height:44.99999999999997px;background:#e9e8f5"></div>
<span class="c" style="left:173.4px;top:257.2px;font-weight:bold;font-size:10.3px;width:29px;text-align:center;color:#1e1e26;-webkit-text-stroke:.2px #1e1e26;transform:scaleX(.9)">B1</span>
<div style="left:203px;top:239.9px;width:123px;height:44.49999999999997px;overflow:hidden"><span class="c" style="left:9.3px;top:3.32px;line-height:12.85px;font-size:10.5px;transform:scaleX(0.94);transform-origin:0 0">Schwankungen in der</span>
<span class="c" style="left:9.3px;top:16.17px;line-height:12.85px;font-size:10.5px;transform:scaleX(0.94);transform-origin:0 0">Qualität der angesaugten</span>
<span class="c" style="left:9.3px;top:29.02px;line-height:12.85px;font-size:10.5px;transform:scaleX(0.94);transform-origin:0 0">Luft</span>
</div>
<div style="left:326.5px;top:239.4px;width:29px;height:44.99999999999997px;background:#e9e8f5"></div>
<span class="c" style="left:326.4px;top:257.2px;font-weight:bold;font-size:10.3px;width:29px;text-align:center;color:#1e1e26;-webkit-text-stroke:.2px #1e1e26;transform:scaleX(.9)">C1</span>
<div style="left:356px;top:239.9px;width:123px;height:44.49999999999997px;overflow:hidden"><span class="c" style="left:9.3px;top:3.32px;line-height:12.85px;font-size:10.5px;transform:scaleX(0.94);transform-origin:0 0">Hoher Druckabfall am</span>
<span class="c" style="left:9.3px;top:16.17px;line-height:12.85px;font-size:10.5px;transform:scaleX(0.94);transform-origin:0 0">Point of Use bei</span>
<span class="c" style="left:9.3px;top:29.02px;line-height:12.85px;font-size:10.5px;transform:scaleX(0.94);transform-origin:0 0">Druckluftentnahme</span>
</div>
<div style="left:479.5px;top:239.4px;width:29px;height:44.99999999999997px;background:#e9e8f5"></div>
<span class="c" style="left:479.4px;top:257.2px;font-weight:bold;font-size:10.3px;width:29px;text-align:center;color:#1e1e26;-webkit-text-stroke:.2px #1e1e26;transform:scaleX(.9)">D1</span>
<div style="left:509px;top:239.9px;width:123px;height:44.49999999999997px;overflow:hidden"><span class="c" style="left:9.3px;top:16.17px;line-height:12.85px;font-size:10.5px;transform:scaleX(0.94);transform-origin:0 0">Fehler bei Probenahme</span>
</div>
<div style="left:632.5px;top:239.4px;width:29px;height:44.99999999999997px;background:#e9e8f5"></div>
<span class="c" style="left:632.4px;top:257.2px;font-weight:bold;font-size:10.3px;width:29px;text-align:center;color:#1e1e26;-webkit-text-stroke:.2px #1e1e26;transform:scaleX(.9)">E1</span>
<div style="left:662px;top:239.9px;width:123px;height:44.49999999999997px;overflow:hidden"><span class="c" style="left:9.3px;top:-3.1px;line-height:12.85px;font-size:10.5px;transform:scaleX(0.94);transform-origin:0 0">Technische</span>
<span class="c" style="left:9.3px;top:9.75px;line-height:12.85px;font-size:10.5px;transform:scaleX(0.9555);transform-origin:0 0">Dokumentation ist</span>
<span class="c" style="left:9.3px;top:22.6px;line-height:12.85px;font-size:10.5px;transform:scaleX(0.94);transform-origin:0 0">unvollständig, fehlerhaft</span>
<span class="c" style="left:9.3px;top:35.45px;line-height:12.85px;font-size:10.5px;transform:scaleX(0.94);transform-origin:0 0">oder nicht vorhanden</span>
</div>
<div style="left:20.5px;top:284.4px;width:29px;height:57.80000000000001px;background:#e9e8f5"></div>
<span class="c" style="left:20.4px;top:308.6px;font-weight:bold;font-size:10.3px;width:29px;text-align:center;color:#1e1e26;-webkit-text-stroke:.2px #1e1e26;transform:scaleX(.9)">A2</span>
<div style="left:50px;top:284.9px;width:123px;height:57.30000000000001px;overflow:hidden"><span class="c" style="left:9.3px;top:3.3px;line-height:12.85px;font-size:10.5px;transform:scaleX(0.94);transform-origin:0 0">Anlage ist nicht korrekt</span>
<span class="c" style="left:9.3px;top:16.15px;line-height:12.85px;font-size:10.5px;transform:scaleX(0.9523);transform-origin:0 0">angeschlossen (Medien,</span>
<span class="c" style="left:9.3px;top:29.0px;line-height:12.85px;font-size:10.5px;transform:scaleX(0.94);transform-origin:0 0">Energie,</span>
<span class="c" style="left:9.3px;top:41.85px;line-height:12.85px;font-size:10.5px;transform:scaleX(0.94);transform-origin:0 0">Signalweiterleitung)</span>
</div>
<div style="left:173.5px;top:284.4px;width:29px;height:57.80000000000001px;background:#e9e8f5"></div>
<span class="c" style="left:173.4px;top:308.6px;font-weight:bold;font-size:10.3px;width:29px;text-align:center;color:#1e1e26;-webkit-text-stroke:.2px #1e1e26;transform:scaleX(.9)">B2</span>
<div style="left:203px;top:284.9px;width:123px;height:57.30000000000001px;overflow:hidden"><span class="c" style="left:9.3px;top:22.57px;line-height:12.85px;font-size:10.5px;transform:scaleX(0.9246);transform-origin:0 0">Betriebsdruck zu hoch</span>
</div>
<div style="left:326.5px;top:284.4px;width:29px;height:57.80000000000001px;background:#e9e8f5"></div>
<span class="c" style="left:326.4px;top:308.6px;font-weight:bold;font-size:10.3px;width:29px;text-align:center;color:#1e1e26;-webkit-text-stroke:.2px #1e1e26;transform:scaleX(.9)">C2</span>
<div style="left:356px;top:284.9px;width:123px;height:57.30000000000001px;overflow:hidden"><span class="c" style="left:9.3px;top:16.15px;line-height:12.85px;font-size:10.5px;transform:scaleX(0.94);transform-origin:0 0">Leckagen im</span>
<span class="c" style="left:9.3px;top:29.0px;line-height:12.85px;font-size:10.5px;transform:scaleX(0.94);transform-origin:0 0">Druckluftverteilsystem</span>
</div>
<div style="left:479.5px;top:284.4px;width:29px;height:57.80000000000001px;background:#e9e8f5"></div>
<span class="c" style="left:479.4px;top:308.6px;font-weight:bold;font-size:10.3px;width:29px;text-align:center;color:#1e1e26;-webkit-text-stroke:.2px #1e1e26;transform:scaleX(.9)">D2</span>
<div style="left:509px;top:284.9px;width:123px;height:57.30000000000001px;overflow:hidden"><span class="c" style="left:9.3px;top:9.72px;line-height:12.85px;font-size:10.5px;transform:scaleX(0.94);transform-origin:0 0">Fehler bei</span>
<span class="c" style="left:9.3px;top:22.57px;line-height:12.85px;font-size:10.5px;transform:scaleX(0.9533);transform-origin:0 0">Instandhaltungs- und</span>
<span class="c" style="left:9.3px;top:35.42px;line-height:12.85px;font-size:10.5px;transform:scaleX(0.94);transform-origin:0 0">Wartungsaktivitäten</span>
</div>
<div style="left:632.5px;top:284.4px;width:29px;height:57.80000000000001px;background:#e9e8f5"></div>
<span class="c" style="left:632.4px;top:308.6px;font-weight:bold;font-size:10.3px;width:29px;text-align:center;color:#1e1e26;-webkit-text-stroke:.2px #1e1e26;transform:scaleX(.9)">E2</span>
<div style="left:662px;top:284.9px;width:123px;height:57.30000000000001px;overflow:hidden"><span class="c" style="left:9.3px;top:9.72px;line-height:12.85px;font-size:10.5px;transform:scaleX(0.9489);transform-origin:0 0">Betriebs-Dokumentation</span>
<span class="c" style="left:9.3px;top:22.57px;line-height:12.85px;font-size:10.5px;transform:scaleX(0.94);transform-origin:0 0">unvollständig, fehlerhaft</span>
<span class="c" style="left:9.3px;top:35.42px;line-height:12.85px;font-size:10.5px;transform:scaleX(0.94);transform-origin:0 0">oder nicht vorhanden</span>
</div>
<div style="left:20.5px;top:342.2px;width:29px;height:75.30000000000001px;background:#e9e8f5"></div>
<span class="c" style="left:20.4px;top:375.15px;font-weight:bold;font-size:10.3px;width:29px;text-align:center;color:#1e1e26;-webkit-text-stroke:.2px #1e1e26;transform:scaleX(.9)">A3</span>
<div style="left:50px;top:342.7px;width:123px;height:74.80000000000001px;overflow:hidden"><span class="c" style="left:9.3px;top:12.05px;line-height:12.85px;font-size:10.5px;transform:scaleX(0.94);transform-origin:0 0">Anlagenkomponenten vor</span>
<span class="c" style="left:9.3px;top:24.9px;line-height:12.85px;font-size:10.5px;transform:scaleX(0.94);transform-origin:0 0">Ort fehlerhaft oder nicht</span>
<span class="c" style="left:9.3px;top:37.75px;line-height:12.85px;font-size:10.5px;transform:scaleX(0.94);transform-origin:0 0">ausreichend</span>
<span class="c" style="left:9.3px;top:50.6px;line-height:12.85px;font-size:10.5px;transform:scaleX(0.94);transform-origin:0 0">gekennzeichnet.</span>
</div>
<div style="left:173.5px;top:342.2px;width:29px;height:75.30000000000001px;background:#e9e8f5"></div>
<span class="c" style="left:173.4px;top:375.15px;font-weight:bold;font-size:10.3px;width:29px;text-align:center;color:#1e1e26;-webkit-text-stroke:.2px #1e1e26;transform:scaleX(.9)">B3</span>
<div style="left:203px;top:342.7px;width:123px;height:74.80000000000001px;overflow:hidden"><span class="c" style="left:9.3px;top:31.33px;line-height:12.85px;font-size:10.5px;transform:scaleX(0.94);transform-origin:0 0">Betriebsdruck zu niedrig</span>
</div>
<div style="left:326.5px;top:342.2px;width:29px;height:75.30000000000001px;background:#e9e8f5"></div>
<span class="c" style="left:326.4px;top:375.15px;font-weight:bold;font-size:10.3px;width:29px;text-align:center;color:#1e1e26;-webkit-text-stroke:.2px #1e1e26;transform:scaleX(.9)">C3</span>
<div style="left:356px;top:342.7px;width:123px;height:74.80000000000001px;overflow:hidden"><span class="c" style="left:9.3px;top:18.48px;line-height:12.85px;font-size:10.5px;transform:scaleX(0.94);transform-origin:0 0">Druck an der</span>
<span class="c" style="left:9.3px;top:31.33px;line-height:12.85px;font-size:10.5px;transform:scaleX(0.94);transform-origin:0 0">Entnahmestelle ist zu</span>
<span class="c" style="left:9.3px;top:44.18px;line-height:12.85px;font-size:10.5px;transform:scaleX(0.94);transform-origin:0 0">gering / zu hoch</span>
</div>
<div style="left:479.5px;top:342.2px;width:29px;height:75.30000000000001px;background:#e9e8f5"></div>
<span class="c" style="left:479.4px;top:375.15px;font-weight:bold;font-size:10.3px;width:29px;text-align:center;color:#1e1e26;-webkit-text-stroke:.2px #1e1e26;transform:scaleX(.9)">D3</span>
<div style="left:509px;top:342.7px;width:123px;height:74.80000000000001px;overflow:hidden"><span class="c" style="left:9.3px;top:5.63px;line-height:12.85px;font-size:10.5px;transform:scaleX(0.94);transform-origin:0 0">Bedienfehler oder</span>
<span class="c" style="left:9.3px;top:18.48px;line-height:12.85px;font-size:10.5px;transform:scaleX(0.94);transform-origin:0 0">Fehlverhalten (allgemein)</span>
<span class="c" style="left:9.3px;top:31.33px;line-height:12.85px;font-size:10.5px;transform:scaleX(0.94);transform-origin:0 0">/ Nicht Einhaltung der</span>
<span class="c" style="left:9.3px;top:44.18px;line-height:12.85px;font-size:10.5px;transform:scaleX(0.9488);transform-origin:0 0">Zugangsberechtigungen</span>
<span class="c" style="left:9.3px;top:57.03px;line-height:12.85px;font-size:10.5px;transform:scaleX(0.94);transform-origin:0 0">für Steuerungen</span>
</div>
<div style="left:632.5px;top:342.2px;width:29px;height:75.30000000000001px;background:#e9e8f5"></div>
<span class="c" style="left:632.4px;top:375.15px;font-weight:bold;font-size:10.3px;width:29px;text-align:center;color:#1e1e26;-webkit-text-stroke:.2px #1e1e26;transform:scaleX(.9)">E3</span>
<div style="left:662px;top:342.7px;width:123px;height:74.80000000000001px;overflow:hidden"><span class="c" style="left:9.3px;top:12.05px;line-height:12.85px;font-size:10.5px;transform:scaleX(0.9553);transform-origin:0 0">Schulungsdokumentation</span>
<span class="c" style="left:9.3px;top:24.9px;line-height:12.85px;font-size:10.5px;transform:scaleX(0.94);transform-origin:0 0">ist unvollständig,</span>
<span class="c" style="left:9.3px;top:37.75px;line-height:12.85px;font-size:10.5px;transform:scaleX(0.94);transform-origin:0 0">fehlerhaft oder nicht</span>
<span class="c" style="left:9.3px;top:50.6px;line-height:12.85px;font-size:10.5px;transform:scaleX(0.94);transform-origin:0 0">vorhanden</span>
</div>
<div style="left:20.5px;top:417.5px;width:29px;height:45.5px;background:#e9e8f5"></div>
<span class="c" style="left:20.4px;top:435.55px;font-weight:bold;font-size:10.3px;width:29px;text-align:center;color:#1e1e26;-webkit-text-stroke:.2px #1e1e26;transform:scaleX(.9)">A4</span>
<div style="left:50px;top:418.0px;width:123px;height:45.0px;overflow:hidden"><span class="c" style="left:9.3px;top:10.0px;line-height:12.85px;font-size:10.5px;transform:scaleX(0.94);transform-origin:0 0">Anlagenspezifikation</span>
<span class="c" style="left:9.3px;top:22.85px;line-height:12.85px;font-size:10.5px;transform:scaleX(0.94);transform-origin:0 0">nicht korrekt</span>
</div>
<div style="left:173.5px;top:417.5px;width:29px;height:45.5px;background:#e9e8f5"></div>
<span class="c" style="left:173.4px;top:435.55px;font-weight:bold;font-size:10.3px;width:29px;text-align:center;color:#1e1e26;-webkit-text-stroke:.2px #1e1e26;transform:scaleX(.9)">B4</span>
<div style="left:203px;top:418.0px;width:123px;height:45.0px;overflow:hidden"><span class="c" style="left:9.3px;top:10.0px;line-height:12.85px;font-size:10.5px;transform:scaleX(0.94);transform-origin:0 0">Ölgehalt in komprimierter</span>
<span class="c" style="left:9.3px;top:22.85px;line-height:12.85px;font-size:10.5px;transform:scaleX(0.94);transform-origin:0 0">Luft zu hoch</span>
</div>
<div style="left:326.5px;top:417.5px;width:29px;height:45.5px;background:#e9e8f5"></div>
<span class="c" style="left:326.4px;top:435.55px;font-weight:bold;font-size:10.3px;width:29px;text-align:center;color:#1e1e26;-webkit-text-stroke:.2px #1e1e26;transform:scaleX(.9)">C4</span>
<div style="left:356px;top:418.0px;width:123px;height:45.0px;overflow:hidden"><span class="c" style="left:9.3px;top:10.0px;line-height:12.85px;font-size:10.5px;transform:scaleX(0.9532);transform-origin:0 0">Keimbelastung am Point</span>
<span class="c" style="left:9.3px;top:22.85px;line-height:12.85px;font-size:10.5px;transform:scaleX(0.94);transform-origin:0 0">of Use</span>
</div>
<div style="left:479.5px;top:417.5px;width:29px;height:45.5px;background:#e9e8f5"></div>
<span class="c" style="left:479.4px;top:435.55px;font-weight:bold;font-size:10.3px;width:29px;text-align:center;color:#1e1e26;-webkit-text-stroke:.2px #1e1e26;transform:scaleX(.9)">D4</span>
<div style="left:509px;top:418.0px;width:123px;height:45.0px;overflow:hidden"><span class="c" style="left:9.3px;top:10.0px;line-height:12.85px;font-size:10.5px;transform:scaleX(0.94);transform-origin:0 0">Änderungen werden nicht</span>
<span class="c" style="left:9.3px;top:22.85px;line-height:12.85px;font-size:10.5px;transform:scaleX(0.94);transform-origin:0 0">mitgeteilt/ dokumentiert</span>
</div>
<div style="left:632.5px;top:417.5px;width:29px;height:45.5px;background:#e9e8f5"></div>
<span class="c" style="left:632.4px;top:435.55px;font-weight:bold;font-size:10.3px;width:29px;text-align:center;color:#1e1e26;-webkit-text-stroke:.2px #1e1e26;transform:scaleX(.9)">E4</span>
<div style="left:662px;top:418.0px;width:123px;height:45.0px;overflow:hidden"><span class="c" style="left:9.3px;top:-2.85px;line-height:12.85px;font-size:10.5px;transform:scaleX(0.94);transform-origin:0 0">Kalibrierdokumentation</span>
<span class="c" style="left:9.3px;top:10.0px;line-height:12.85px;font-size:10.5px;transform:scaleX(0.94);transform-origin:0 0">ist unvollständig,</span>
<span class="c" style="left:9.3px;top:22.85px;line-height:12.85px;font-size:10.5px;transform:scaleX(0.94);transform-origin:0 0">fehlerhaft oder nicht</span>
<span class="c" style="left:9.3px;top:35.7px;line-height:12.85px;font-size:10.5px;transform:scaleX(0.94);transform-origin:0 0">vorhanden</span>
</div>
<div style="left:20.5px;top:463px;width:29px;height:89px;background:#e9e8f5"></div>
<span class="c" style="left:20.4px;top:502.8px;font-weight:bold;font-size:10.3px;width:29px;text-align:center;color:#1e1e26;-webkit-text-stroke:.2px #1e1e26;transform:scaleX(.9)">A5</span>
<div style="left:50px;top:463.5px;width:123px;height:88.5px;overflow:hidden"><span class="c" style="left:9.3px;top:31.75px;line-height:12.85px;font-size:10.5px;transform:scaleX(0.94);transform-origin:0 0">Kein geeignetes Material</span>
<span class="c" style="left:9.3px;top:44.6px;line-height:12.85px;font-size:10.5px;transform:scaleX(0.94);transform-origin:0 0">und Oberflächengüte</span>
</div>
<div style="left:173.5px;top:463px;width:29px;height:89px;background:#e9e8f5"></div>
<span class="c" style="left:173.4px;top:502.8px;font-weight:bold;font-size:10.3px;width:29px;text-align:center;color:#1e1e26;-webkit-text-stroke:.2px #1e1e26;transform:scaleX(.9)">B5</span>
<div style="left:203px;top:463.5px;width:123px;height:88.5px;overflow:hidden"><span class="c" style="left:9.3px;top:-0.38px;line-height:12.85px;font-size:10.5px;transform:scaleX(0.94);transform-origin:0 0">Partikelgehalt in</span>
<span class="c" style="left:9.3px;top:12.47px;line-height:12.85px;font-size:10.5px;transform:scaleX(0.94);transform-origin:0 0">komprimierter Luft zu</span>
<span class="c" style="left:9.3px;top:25.32px;line-height:12.85px;font-size:10.5px;transform:scaleX(0.94);transform-origin:0 0">hoch (Betrifft Druckluft im</span>
<span class="c" style="left:9.3px;top:38.17px;line-height:12.85px;font-size:10.5px;transform:scaleX(0.94);transform-origin:0 0">Bereich der Erzeugung</span>
<span class="c" style="left:9.3px;top:51.02px;line-height:12.85px;font-size:10.5px;transform:scaleX(0.94);transform-origin:0 0">und Verteilung bis vor</span>
<span class="c" style="left:9.3px;top:63.87px;line-height:12.85px;font-size:10.5px;transform:scaleX(0.94);transform-origin:0 0">endständigem Filtern am</span>
<span class="c" style="left:9.3px;top:76.72px;line-height:12.85px;font-size:10.5px;transform:scaleX(0.94);transform-origin:0 0">Point of Use)</span>
</div>
<div style="left:326.5px;top:463px;width:29px;height:89px;background:#e9e8f5"></div>
<span class="c" style="left:326.4px;top:502.8px;font-weight:bold;font-size:10.3px;width:29px;text-align:center;color:#1e1e26;-webkit-text-stroke:.2px #1e1e26;transform:scaleX(.9)">C5</span>
<div style="left:356px;top:463.5px;width:123px;height:88.5px;overflow:hidden"><span class="c" style="left:9.3px;top:31.75px;line-height:12.85px;font-size:10.5px;transform:scaleX(0.94);transform-origin:0 0">Kondensat am Point of</span>
<span class="c" style="left:9.3px;top:44.6px;line-height:12.85px;font-size:10.5px;transform:scaleX(0.94);transform-origin:0 0">Use</span>
</div>
<div style="left:479.5px;top:463px;width:29px;height:89px;background:#e9e8f5"></div>
<div style="left:632.5px;top:463px;width:29px;height:89px;background:#e9e8f5"></div>
<div style="left:20.5px;top:552px;width:29px;height:37.200000000000045px;background:#e9e8f5"></div>
<span class="c" style="left:20.4px;top:565.9px;font-weight:bold;font-size:10.3px;width:29px;text-align:center;color:#1e1e26;-webkit-text-stroke:.2px #1e1e26;transform:scaleX(.9)">A6</span>
<div style="left:50px;top:552.5px;width:123px;height:36.700000000000045px;overflow:hidden"><span class="c" style="left:9.3px;top:5.85px;line-height:12.85px;font-size:10.5px;transform:scaleX(0.94);transform-origin:0 0">Ausführungs-</span>
<span class="c" style="left:9.3px;top:18.7px;line-height:12.85px;font-size:10.5px;transform:scaleX(0.94);transform-origin:0 0">mängel</span>
</div>
<div style="left:173.5px;top:552px;width:29px;height:37.200000000000045px;background:#e9e8f5"></div>
<span class="c" style="left:173.4px;top:565.9px;font-weight:bold;font-size:10.3px;width:29px;text-align:center;color:#1e1e26;-webkit-text-stroke:.2px #1e1e26;transform:scaleX(.9)">B6</span>
<div style="left:203px;top:552.5px;width:123px;height:36.700000000000045px;overflow:hidden"><span class="c" style="left:9.3px;top:12.28px;line-height:12.85px;font-size:10.5px;transform:scaleX(0.94);transform-origin:0 0">Drucktaupunkt zu hoch</span>
</div>
<div style="left:326.5px;top:552px;width:29px;height:37.200000000000045px;background:#e9e8f5"></div>
<span class="c" style="left:326.4px;top:565.9px;font-weight:bold;font-size:10.3px;width:29px;text-align:center;color:#1e1e26;-webkit-text-stroke:.2px #1e1e26;transform:scaleX(.9)">C6</span>
<div style="left:356px;top:552.5px;width:123px;height:36.700000000000045px;overflow:hidden"><span class="c" style="left:9.3px;top:5.85px;line-height:12.85px;font-size:10.5px;transform:scaleX(0.94);transform-origin:0 0">Verunreinigungen im</span>
<span class="c" style="left:9.3px;top:18.7px;line-height:12.85px;font-size:10.5px;transform:scaleX(0.94);transform-origin:0 0">Druckluftverteilsystem</span>
</div>
<div style="left:479.5px;top:552px;width:29px;height:37.200000000000045px;background:#e9e8f5"></div>
<div style="left:632.5px;top:552px;width:29px;height:37.200000000000045px;background:#e9e8f5"></div>
<div style="left:20.5px;top:589.2px;width:29px;height:44.799999999999955px;background:#e9e8f5"></div>
<div style="left:173.5px;top:589.2px;width:29px;height:44.799999999999955px;background:#e9e8f5"></div>
<span class="c" style="left:173.4px;top:606.9px;font-weight:bold;font-size:10.3px;width:29px;text-align:center;color:#1e1e26;-webkit-text-stroke:.2px #1e1e26;transform:scaleX(.9)">B7</span>
<div style="left:203px;top:589.7px;width:123px;height:44.299999999999955px;overflow:hidden"><span class="c" style="left:9.3px;top:3.23px;line-height:12.85px;font-size:10.5px;transform:scaleX(0.94);transform-origin:0 0">Hoher Druckabfall im</span>
<span class="c" style="left:9.3px;top:16.07px;line-height:12.85px;font-size:10.5px;transform:scaleX(0.94);transform-origin:0 0">Druckbehälter bei</span>
<span class="c" style="left:9.3px;top:28.93px;line-height:12.85px;font-size:10.5px;transform:scaleX(0.94);transform-origin:0 0">Maximalentnahme</span>
</div>
<div style="left:326.5px;top:589.2px;width:29px;height:44.799999999999955px;background:#e9e8f5"></div>
<div style="left:479.5px;top:589.2px;width:29px;height:44.799999999999955px;background:#e9e8f5"></div>
<div style="left:632.5px;top:589.2px;width:29px;height:44.799999999999955px;background:#e9e8f5"></div>
<div style="left:20.5px;top:634px;width:29px;height:59px;background:#e9e8f5"></div>
<div style="left:173.5px;top:634px;width:29px;height:59px;background:#e9e8f5"></div>
<div style="left:326.5px;top:634px;width:29px;height:59px;background:#e9e8f5"></div>
<div style="left:479.5px;top:634px;width:29px;height:59px;background:#e9e8f5"></div>
<div style="left:632.5px;top:634px;width:29px;height:59px;background:#e9e8f5"></div>
<div style="left:20.5px;top:693px;width:29px;height:59px;background:#e9e8f5"></div>
<div style="left:173.5px;top:693px;width:29px;height:59px;background:#e9e8f5"></div>
<div style="left:326.5px;top:693px;width:29px;height:59px;background:#e9e8f5"></div>
<div style="left:479.5px;top:693px;width:29px;height:59px;background:#e9e8f5"></div>
<div style="left:632.5px;top:693px;width:29px;height:59px;background:#e9e8f5"></div>
<div style="left:20.5px;top:284.4px;width:764.5px;height:0px;border-top:1px dotted #62626e"></div>
<div style="left:20.5px;top:342.2px;width:764.5px;height:0px;border-top:1px dotted #62626e"></div>
<div style="left:20.5px;top:417.5px;width:764.5px;height:0px;border-top:1px dotted #62626e"></div>
<div style="left:20.5px;top:463px;width:764.5px;height:0px;border-top:1px dotted #62626e"></div>
<div style="left:20.5px;top:552px;width:764.5px;height:0px;border-top:1px dotted #62626e"></div>
<div style="left:20.5px;top:589.2px;width:764.5px;height:0px;border-top:1px dotted #62626e"></div>
<div style="left:20.5px;top:634px;width:764.5px;height:0px;border-top:1px dotted #62626e"></div>
<div style="left:20.5px;top:693px;width:764.5px;height:0px;border-top:1px dotted #62626e"></div>
<div style="left:49px;top:239.4px;width:0px;height:512.6px;border-left:1px dotted #62626e"></div>
<div style="left:173px;top:239.4px;width:0px;height:512.6px;border-left:1px dotted #62626e"></div>
<div style="left:202px;top:239.4px;width:0px;height:512.6px;border-left:1px dotted #62626e"></div>
<div style="left:326px;top:239.4px;width:0px;height:512.6px;border-left:1px dotted #62626e"></div>
<div style="left:355px;top:239.4px;width:0px;height:512.6px;border-left:1px dotted #62626e"></div>
<div style="left:479px;top:239.4px;width:0px;height:512.6px;border-left:1px dotted #62626e"></div>
<div style="left:508px;top:239.4px;width:0px;height:512.6px;border-left:1px dotted #62626e"></div>
<div style="left:632px;top:239.4px;width:0px;height:512.6px;border-left:1px dotted #62626e"></div>
<div style="left:661px;top:239.4px;width:0px;height:512.6px;border-left:1px dotted #62626e"></div>
<div style="left:784.6px;top:146px;width:1.2px;height:606.6px;background:repeating-linear-gradient(to bottom,#34343e 0,#34343e 5.2px,transparent 5.2px,transparent 6.4px)"></div>
<div style="left:20.5px;top:751.6px;width:765.3px;height:1.2px;background:repeating-linear-gradient(to right,#34343e 0,#34343e 5.2px,transparent 5.2px,transparent 6.4px)"></div>
<div style="left:2px;top:130px;width:1005px;height:15px;background:linear-gradient(to bottom,#f3f4f9 0%,#e9ebf3 55%,#e2e5ef 100%)"></div>
<svg style="left:7.8px;top:134.3px;" width="9" height="8.5" viewBox="0 0 9 8.5"><path d="M8.6 0.4V8.2H0.6Z" fill="#c4c7d4"/></svg>
<span class="t" style="left:25.1px;top:133px;font-size:10.1px;width:20px;text-align:center;color:#3c3c46;-webkit-text-stroke:.15px #3c3c46;line-height:12px">A</span>
<span class="t" style="left:101.6px;top:133px;font-size:10.1px;width:20px;text-align:center;color:#3c3c46;-webkit-text-stroke:.15px #3c3c46;line-height:12px">B</span>
<span class="t" style="left:178.1px;top:133px;font-size:10.1px;width:20px;text-align:center;color:#3c3c46;-webkit-text-stroke:.15px #3c3c46;line-height:12px">C</span>
<span class="t" style="left:254.6px;top:133px;font-size:10.1px;width:20px;text-align:center;color:#3c3c46;-webkit-text-stroke:.15px #3c3c46;line-height:12px">D</span>
<span class="t" style="left:331.1px;top:133px;font-size:10.1px;width:20px;text-align:center;color:#3c3c46;-webkit-text-stroke:.15px #3c3c46;line-height:12px">E</span>
<span class="t" style="left:407.6px;top:133px;font-size:10.1px;width:20px;text-align:center;color:#3c3c46;-webkit-text-stroke:.15px #3c3c46;line-height:12px">F</span>
<span class="t" style="left:484.1px;top:133px;font-size:10.1px;width:20px;text-align:center;color:#3c3c46;-webkit-text-stroke:.15px #3c3c46;line-height:12px">G</span>
<div style="left:508px;top:130px;width:124px;height:15.6px;background:linear-gradient(to bottom,#f9e888 0%,#f8e668 45%,#f6e055 100%);border-top:1px solid #e6c65e;border-bottom:1px solid #d9b440"></div>
<span class="t" style="left:560.6px;top:133px;font-size:10.1px;width:20px;text-align:center;color:#3c3c46;-webkit-text-stroke:.15px #3c3c46;line-height:12px">H</span>
<span class="t" style="left:637.1px;top:133px;font-size:10.1px;width:20px;text-align:center;color:#3c3c46;-webkit-text-stroke:.15px #3c3c46;line-height:12px">I</span>
<span class="t" style="left:713.6px;top:133px;font-size:10.1px;width:20px;text-align:center;color:#3c3c46;-webkit-text-stroke:.15px #3c3c46;line-height:12px">J</span>
<span class="t" style="left:805.9px;top:133px;font-size:10.1px;width:20px;text-align:center;color:#3c3c46;-webkit-text-stroke:.15px #3c3c46;line-height:12px">K</span>
<span class="t" style="left:866.4px;top:133px;font-size:10.1px;width:20px;text-align:center;color:#3c3c46;-webkit-text-stroke:.15px #3c3c46;line-height:12px">L</span>
<span class="t" style="left:926.9px;top:133px;font-size:10.1px;width:20px;text-align:center;color:#3c3c46;-webkit-text-stroke:.15px #3c3c46;line-height:12px">M</span>
<span class="t" style="left:987.8px;top:133px;font-size:10.1px;width:20px;text-align:center;color:#3c3c46;-webkit-text-stroke:.15px #3c3c46;line-height:12px">N</span>
<div style="left:20px;top:130.5px;width:1px;height:14.5px;background:#bfc2d1"></div>
<div style="left:49px;top:130.5px;width:1px;height:14.5px;background:#bfc2d1"></div>
<div style="left:173px;top:130.5px;width:1px;height:14.5px;background:#bfc2d1"></div>
<div style="left:202px;top:130.5px;width:1px;height:14.5px;background:#bfc2d1"></div>
<div style="left:326px;top:130.5px;width:1px;height:14.5px;background:#bfc2d1"></div>
<div style="left:355px;top:130.5px;width:1px;height:14.5px;background:#bfc2d1"></div>
<div style="left:479px;top:130.5px;width:1px;height:14.5px;background:#bfc2d1"></div>
<div style="left:508px;top:130.5px;width:1px;height:14.5px;background:#dcc060"></div>
<div style="left:632px;top:130.5px;width:1px;height:14.5px;background:#dcc060"></div>
<div style="left:661px;top:130.5px;width:1px;height:14.5px;background:#bfc2d1"></div>
<div style="left:785px;top:130.5px;width:1px;height:14.5px;background:#bfc2d1"></div>
<div style="left:845.5px;top:130.5px;width:1px;height:14.5px;background:#bfc2d1"></div>
<div style="left:906px;top:130.5px;width:1px;height:14.5px;background:#bfc2d1"></div>
<div style="left:966.5px;top:130.5px;width:1px;height:14.5px;background:#bfc2d1"></div>
<div style="left:2px;top:145px;width:1005px;height:1px;background:#9da4b8"></div>
<div style="left:508px;top:145px;width:124px;height:1px;background:#d4ae3e"></div>
<div style="left:2px;top:145.5px;width:18px;height:640px;background:#e8e9f2"></div>
<span class="t" style="left:2px;top:153.9px;font-size:10.2px;width:18px;text-align:center;color:#3c3c46;line-height:12px">1</span>
<span class="t" style="left:2px;top:171.9px;font-size:10.2px;width:18px;text-align:center;color:#3c3c46;line-height:12px">2</span>
<span class="t" style="left:2px;top:187.9px;font-size:10.2px;width:18px;text-align:center;color:#3c3c46;line-height:12px">3</span>
<span class="t" style="left:2px;top:228.3px;font-size:10.2px;width:18px;text-align:center;color:#3c3c46;line-height:12px">4</span>
<span class="t" style="left:2px;top:273.3px;font-size:10.2px;width:18px;text-align:center;color:#3c3c46;line-height:12px">5</span>
<span class="t" style="left:2px;top:331.1px;font-size:10.2px;width:18px;text-align:center;color:#3c3c46;line-height:12px">6</span>
<span class="t" style="left:2px;top:406.4px;font-size:10.2px;width:18px;text-align:center;color:#3c3c46;line-height:12px">7</span>
<span class="t" style="left:2px;top:451.9px;font-size:10.2px;width:18px;text-align:center;color:#3c3c46;line-height:12px">8</span>
<span class="t" style="left:2px;top:540.9px;font-size:10.2px;width:18px;text-align:center;color:#3c3c46;line-height:12px">9</span>
<span class="t" style="left:2px;top:578.1px;font-size:10.2px;width:18px;text-align:center;color:#3c3c46;line-height:12px">10</span>
<span class="t" style="left:2px;top:622.9px;font-size:10.2px;width:18px;text-align:center;color:#3c3c46;line-height:12px">11</span>
<span class="t" style="left:2px;top:681.9px;font-size:10.2px;width:18px;text-align:center;color:#3c3c46;line-height:12px">12</span>
<span class="t" style="left:2px;top:740.9px;font-size:10.2px;width:18px;text-align:center;color:#3c3c46;line-height:12px">13</span>
<span class="t" style="left:2px;top:754.7px;font-size:10.2px;width:18px;text-align:center;color:#3c3c46;line-height:12px">14</span>
<span class="t" style="left:2px;top:768.3px;font-size:10.2px;width:18px;text-align:center;color:#3c3c46;line-height:12px">15</span>
<div style="left:2px;top:165px;width:18px;height:1px;background:#c0c3d2"></div>
<div style="left:2px;top:183px;width:18px;height:1px;background:#c0c3d2"></div>
<div style="left:2px;top:199px;width:18px;height:1px;background:#c0c3d2"></div>
<div style="left:2px;top:239.4px;width:18px;height:1px;background:#c0c3d2"></div>
<div style="left:2px;top:284.4px;width:18px;height:1px;background:#c0c3d2"></div>
<div style="left:2px;top:342.2px;width:18px;height:1px;background:#c0c3d2"></div>
<div style="left:2px;top:417.5px;width:18px;height:1px;background:#c0c3d2"></div>
<div style="left:2px;top:463px;width:18px;height:1px;background:#c0c3d2"></div>
<div style="left:2px;top:552px;width:18px;height:1px;background:#c0c3d2"></div>
<div style="left:2px;top:589.2px;width:18px;height:1px;background:#c0c3d2"></div>
<div style="left:2px;top:634px;width:18px;height:1px;background:#c0c3d2"></div>
<div style="left:2px;top:693px;width:18px;height:1px;background:#c0c3d2"></div>
<div style="left:2px;top:752px;width:18px;height:1px;background:#c0c3d2"></div>
<div style="left:2px;top:765.8px;width:18px;height:1px;background:#c0c3d2"></div>
<div style="left:2px;top:779.4px;width:18px;height:1px;background:#c0c3d2"></div>
<div style="left:20px;top:145.5px;width:1px;height:640px;background:#b9bdcd"></div>
<div style="left:1007px;top:129.3px;width:10px;height:656px;background:#e6e8f3;border-left:1px solid #cfd2e0"></div>
<div style="left:1007.5px;top:130px;width:10px;height:7px;background:#f2f2f8;border:1px solid #b3b5c6;border-left-color:#9a9cb0"></div>
<div style="left:1009.5px;top:132.6px;width:6px;height:1px;background:#9a9cb0"></div>
<svg style="left:1008.5px;top:140.5px;" width="7" height="4.5" viewBox="0 0 7 4.5"><path d="M0 4.5L3.5 0.3L7 4.5Z" fill="#40404a"/></svg>
<div style="left:1007.5px;top:150.5px;width:9.5px;height:165px;background:linear-gradient(to right,#f7f6fa,#eeedf4);border:1px solid #aeb1c4;border-radius:1.5px"></div>
<div style="left:1009.5px;top:229px;width:6px;height:1px;background:#9b9eb2"></div>
<div style="left:1009.5px;top:231px;width:6px;height:1px;background:#9b9eb2"></div>
<div style="left:1009.5px;top:233px;width:6px;height:1px;background:#9b9eb2"></div>
<svg style="left:1008.5px;top:776px;" width="7" height="4.5" viewBox="0 0 7 4.5"><path d="M0 0.2L3.5 4.4L7 0.2Z" fill="#40404a"/></svg>
<div style="left:2px;top:785px;width:1015px;height:13px;background:#e7e9f3"></div>
<div style="left:2px;top:785px;width:1015px;height:1px;background:#b9bccb"></div>
<div style="left:2px;top:797.6px;width:1015px;height:1px;background:#b4b6c6"></div>
<svg style="left:4.6px;top:786.2px;" width="7" height="9" viewBox="0 0 7 9"><path d="M0.9 1.8V7.2" stroke="#474d66" stroke-width="1.1"/><path d="M5.2 1.8L2.2 4.5L5.2 7.2Z" fill="#474d66"/></svg>
<svg style="left:16.8px;top:786.2px;" width="6" height="9" viewBox="0 0 6 9"><path d="M4.2 1.8L1.2 4.5L4.2 7.2Z" fill="#474d66"/></svg>
<svg style="left:27.6px;top:786.2px;" width="6" height="9" viewBox="0 0 6 9"><path d="M1.2 1.8L4.2 4.5L1.2 7.2Z" fill="#474d66"/></svg>
<svg style="left:38.6px;top:786.2px;" width="7" height="9" viewBox="0 0 7 9"><path d="M5.9 1.8V7.2" stroke="#474d66" stroke-width="1.1"/><path d="M1.6 1.8L4.6 4.5L1.6 7.2Z" fill="#474d66"/></svg>
<div style="left:48.5px;top:785px;width:1px;height:13px;background:#c3c5d4"></div>
<svg style="left:49px;top:785px;" width="590" height="13.4" viewBox="0 0 590 13.4"><path d="M59.2 12.6L67.4 0.9H135.79999999999998L127.6 12.6Z" fill="#eceef6" stroke="#a4a7b9" stroke-width=".9"/><path d="M127.6 12.6L135.79999999999998 0.9H224.2L216 12.6Z" fill="#eceef6" stroke="#a4a7b9" stroke-width=".9"/><path d="M216 12.6L224.2 0.9H298.2L290 12.6Z" fill="#eceef6" stroke="#a4a7b9" stroke-width=".9"/><path d="M290 12.6L298.2 0.9H369.59999999999997L361.4 12.6Z" fill="#eceef6" stroke="#a4a7b9" stroke-width=".9"/><path d="M361.4 12.6L369.59999999999997 0.9H468.2L460 12.6Z" fill="#eceef6" stroke="#a4a7b9" stroke-width=".9"/><path d="M460 12.6L468.2 0.9H558.8000000000001L550.6 12.6Z" fill="#dcefe0" stroke="#a4a7b9" stroke-width=".9"/><path d="M550.6 12.6L558.8000000000001 0.9H584.7L576.5 12.6Z" fill="#eef0f7" stroke="#a4a7b9" stroke-width=".9"/><path d="M0 0H67.8L59.2 12.6H0Z" fill="#f7f6fa"/><path d="M67.60000000000001 0.6L59.2 12.6H0" fill="none" stroke="#a4a7b9" stroke-width=".9"/></svg>
<span class="t" style="left:58px;top:785.8px;font-weight:bold;font-size:10.6px;color:#16162a;transform:scaleX(0.9125);transform-origin:0 50%">Übersicht</span>
<span class="t" style="left:119.4px;top:785.9px;font-size:10.4px;color:#55586a;transform:scaleX(0.8888);transform-origin:0 50%">A-Allgemein</span>
<span class="t" style="left:191.6px;top:785.9px;font-size:10.4px;color:#55586a;transform:scaleX(0.9462);transform-origin:0 50%">B-Aufbereitung</span>
<span class="t" style="left:278.6px;top:785.9px;font-size:10.4px;color:#55586a;transform:scaleX(0.9233);transform-origin:0 50%">C-Verteilung</span>
<span class="t" style="left:351.6px;top:785.9px;font-size:10.4px;color:#55586a;transform:scaleX(0.9089);transform-origin:0 50%">D-Bedienart</span>
<span class="t" style="left:424px;top:785.9px;font-size:10.4px;color:#55586a;transform:scaleX(0.9342);transform-origin:0 50%">E-Dokumentation</span>
<span class="t" style="left:521.4px;top:785.9px;font-size:10.4px;color:#2c3a34;transform:scaleX(0.9563);transform-origin:0 50%">Nachbewertung</span>
<svg style="left:610px;top:786.5px;" width="12" height="11" viewBox="0 0 12 11"><rect x="2.5" y="2.5" width="8.5" height="6.5" fill="#e8ecfa" stroke="#5a6cb4" stroke-width="1"/><path d="M3 9.6H11.6V3" fill="none" stroke="#7a80a0" stroke-width=".8"/><circle cx="2.6" cy="2.6" r="2" fill="#f3c13c" stroke="#d89a20" stroke-width=".6"/></svg>
<div style="left:800px;top:785.6px;width:207px;height:12.4px;background:#e4e6f1"></div>
<div style="left:801.2px;top:786px;width:5.8px;height:11.5px;background:#f4f4f9;border:1px solid #80849a"></div>
<div style="left:803.6px;top:788.5px;width:1px;height:6.5px;background:#9a9db0"></div>
<svg style="left:811px;top:787.5px;" width="4.5" height="8" viewBox="0 0 4.5 8"><path d="M4.3 0.5L0.3 4L4.3 7.5Z" fill="#40404a"/></svg>
<div style="left:820.8px;top:786px;width:100px;height:11.5px;background:linear-gradient(to bottom,#f8f7fb,#efeef5);border:1px solid #aeb1c4;border-radius:1.5px"></div>
<div style="left:868px;top:788.5px;width:1px;height:6px;background:#9b9eb2"></div>
<div style="left:870px;top:788.5px;width:1px;height:6px;background:#9b9eb2"></div>
<div style="left:872px;top:788.5px;width:1px;height:6px;background:#9b9eb2"></div>
<svg style="left:992px;top:787.5px;" width="4.5" height="8" viewBox="0 0 4.5 8"><path d="M0.2 0.5L4.2 4L0.2 7.5Z" fill="#40404a"/></svg>
<div style="left:1001.2px;top:786px;width:5.8px;height:11.5px;background:#f4f4f9;border:1px solid #80849a"></div>
<div style="left:1003.6px;top:788.5px;width:1px;height:6.5px;background:#9a9db0"></div>
<div style="left:1007px;top:785px;width:10px;height:13px;background:#e6e8f3"></div>
<div style="left:2px;top:798.4px;width:1015px;height:15.6px;background:linear-gradient(to bottom,#f4f3fa 0%,#e9e7f4 25%,#dbd8ec 55%,#d9d5ea 75%,#e2dff0 100%)"></div>
<span class="t" style="left:7px;top:801.3px;font-size:9.7px;color:#4a4a5a;transform:scaleX(0.9086);transform-origin:0 50%">Bereit</span>
<div style="left:37px;top:799.5px;width:1px;height:13px;background:#b9b8cc"></div>
<div style="left:38px;top:799.5px;width:1px;height:13px;background:#f4f3fa"></div>
<div style="left:825.5px;top:799.5px;width:1px;height:13px;background:#b9b8cc"></div>
<div style="left:826.5px;top:799.5px;width:1px;height:13px;background:#f4f3fa"></div>
<div style="left:829.5px;top:799.4px;width:14.5px;height:13.6px;background:linear-gradient(to bottom,#fdf0b0,#f8e07a);border:1px solid #e6c85a;border-radius:2px"></div>
<svg style="left:832px;top:802px;" width="10" height="8" viewBox="0 0 10 8"><rect x="0.5" y="0.5" width="9" height="7" fill="#fffbe6" stroke="#6a6a7a" stroke-width=".9"/><path d="M0.5 2.8H9.5M0.5 5.2H9.5M3.5 0.5V7.5M6.5 0.5V7.5" stroke="#7a7a8a" stroke-width=".7"/></svg>
<svg style="left:846px;top:801.5px;" width="11" height="9" viewBox="0 0 11 9"><rect x="0.5" y="0.5" width="10" height="8" fill="#a9a9b8" stroke="#6a6a7a" stroke-width=".9"/><rect x="2.6" y="2" width="5.8" height="5" fill="#ececf3" stroke="#70707f" stroke-width=".7"/></svg>
<svg style="left:861px;top:801.5px;" width="11" height="9" viewBox="0 0 11 9"><rect x="0.5" y="0.5" width="10" height="8" fill="#c4c4d0" stroke="#6a6a7a" stroke-width=".9"/><path d="M5.5 0.5V5.5M0.5 5.5H10.5" stroke="#62627a" stroke-width="1"/><rect x="1.4" y="1.4" width="3.4" height="3.4" fill="#ececf3"/></svg>
<span class="t" style="left:881.3px;top:801.3px;font-size:9.7px;color:#4a4a5a;transform:scaleX(0.8628);transform-origin:0 50%">100 %</span>
<div style="left:924px;top:805.6px;width:80px;height:1px;background:#a7a6bc"></div>
<div style="left:924px;top:806.6px;width:80px;height:1px;background:#f3f2f9"></div>
<div style="left:912.5px;top:800.3px;width:11.2px;height:11.2px;border-radius:50%;background:radial-gradient(circle at 50% 35%,#fbfbfe,#e6e5f0);border:1px solid #8e8ea2"></div>
<div style="left:915.4px;top:805.3px;width:5.4px;height:1.4px;background:#55556a"></div>
<div style="left:1004.6px;top:800.3px;width:11.2px;height:11.2px;border-radius:50%;background:radial-gradient(circle at 50% 35%,#fbfbfe,#e6e5f0);border:1px solid #8e8ea2"></div>
<div style="left:1007.5px;top:805.3px;width:5.4px;height:1.4px;background:#55556a"></div>
<div style="left:1009.5px;top:803.3px;width:1.4px;height:5.4px;background:#55556a"></div>
<svg style="left:960.5px;top:800.5px;" width="7" height="11" viewBox="0 0 7 11"><path d="M0.5 0.5H6.5V7L3.5 10.3L0.5 7Z" fill="#f6f6fb" stroke="#77778c" stroke-width=".9"/></svg>
<div style="left:0;top:0;width:1020px;height:2px;background:#2b7f3b"></div>
<div style="left:0;top:2px;width:1020px;height:1px;background:rgba(43,110,59,.5)"></div>
<div style="left:0;top:0;width:2px;height:816px;background:#1f7a31"></div>
<div style="left:1018px;top:0;width:2px;height:816px;background:#257c37"></div>
<div style="left:1017px;top:0;width:1px;height:816px;background:rgba(37,124,55,.55)"></div>
<div style="left:0;top:814px;width:1020px;height:2px;background:#287e3a"></div>
<div style="left:0;top:813px;width:1020px;height:1px;background:rgba(40,126,58,.6)"></div>
</div>
</body></html>
